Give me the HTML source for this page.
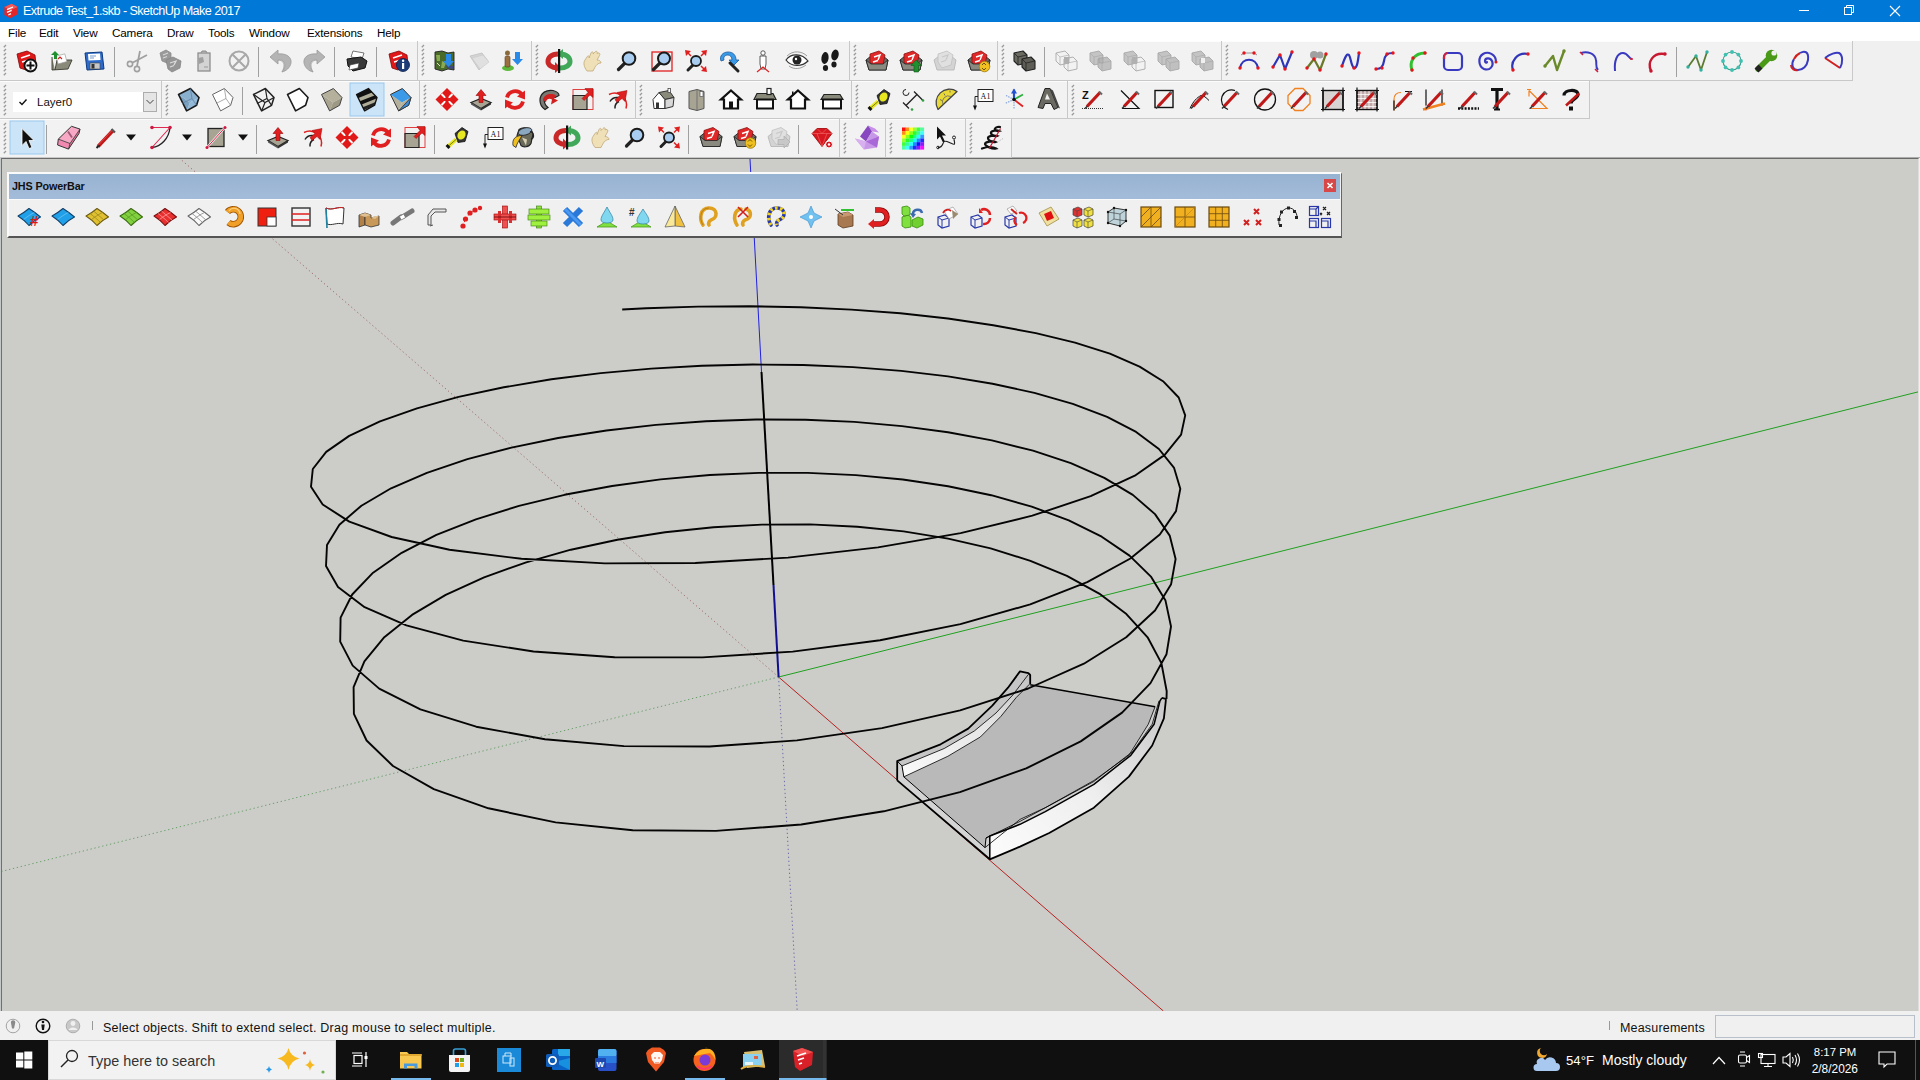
<!DOCTYPE html>
<html><head><meta charset="utf-8"><style>
*{box-sizing:border-box}
html,body{margin:0;padding:0}
body{width:1920px;height:1080px;position:relative;overflow:hidden;background:#f0f0f0;font-family:"Liberation Sans",sans-serif;}
.a{position:absolute}
#title{left:0;top:0;width:1920px;height:22px;background:#0078d7;color:#fff;font-size:12.5px}
#menu{left:0;top:22px;width:1920px;height:19px;background:#fff;font-size:11.7px;color:#000}
#menu span{position:absolute;top:4px;white-space:nowrap;letter-spacing:-0.18px}
#tb{left:0;top:41px;width:1920px;height:117px;background:#f0f0f0}
#vp{left:0;top:158px;width:1920px;height:853px}
#status{left:0;top:1011px;width:1920px;height:29px;background:#f0f0f0;font-size:12.5px;color:#111}
#task{left:0;top:1040px;width:1920px;height:40px;background:#101010;color:#fff}
</style></head>
<body>
<div id="title" class="a"><svg class="a" style="left:3px;top:3px" width="16" height="16" viewBox="0 0 24 24"><polygon points="2,6 13,1 22,6 22,17 11,23 2,18" fill="#e3262a"/><polygon points="2,6 13,1 22,6 11,11" fill="#f05a5a"/><path d="M6,10 L15,6 M6,14 L13,11 M8,18 L12,16" stroke="#fff" stroke-width="2"/></svg>
<span class="a" style="left:23px;top:4px;white-space:nowrap;letter-spacing:-0.55px;font-size:12.6px">Extrude Test_1.skb - SketchUp Make 2017</span>
<div class="a" style="left:1799px;top:10px;width:10px;height:1px;background:#fff"></div>
<svg class="a" style="left:1843px;top:4px" width="12" height="12" viewBox="0 0 12 12"><rect x="1.5" y="3.5" width="7" height="7" fill="none" stroke="#fff"/><path d="M3.5,3.5 V1.5 H10.5 V8.5 H8.5" fill="none" stroke="#fff"/></svg>
<svg class="a" style="left:1889px;top:5px" width="12" height="12" viewBox="0 0 12 12"><path d="M1,1 L11,11 M11,1 L1,11" stroke="#fff" stroke-width="1.1"/></svg>
</div>
<div id="menu" class="a">
<span style="left:8px">File</span><span style="left:39px">Edit</span><span style="left:73px">View</span><span style="left:112px">Camera</span><span style="left:167px">Draw</span><span style="left:208px">Tools</span><span style="left:249px">Window</span><span style="left:307px">Extensions</span><span style="left:377px">Help</span>
</div>
<div id="tb" class="a"><svg class="a" style="left:0;top:-41px" width="1920" height="158" viewBox="0 0 1920 158"><rect x="0" y="41" width="1920" height="117" fill="#f0f0f0" /><rect x="0" y="157" width="1920" height="1" fill="#acacac" /><rect x="0" y="41" width="417" height="39" fill="#f2f2f2" /><line x1="0" y1="80.5" x2="418" y2="80.5" stroke="#c8c8c8" stroke-width="1"/><line x1="417.5" y1="41" x2="417.5" y2="81" stroke="#c8c8c8" stroke-width="1"/><line x1="0" y1="41.5" x2="417" y2="41.5" stroke="#fcfcfc" stroke-width="1"/><rect x="418" y="41" width="113" height="39" fill="#f2f2f2" /><line x1="418" y1="80.5" x2="532" y2="80.5" stroke="#c8c8c8" stroke-width="1"/><line x1="531.5" y1="41" x2="531.5" y2="81" stroke="#c8c8c8" stroke-width="1"/><line x1="418" y1="41.5" x2="531" y2="41.5" stroke="#fcfcfc" stroke-width="1"/><rect x="532" y="41" width="317" height="39" fill="#f2f2f2" /><line x1="532" y1="80.5" x2="850" y2="80.5" stroke="#c8c8c8" stroke-width="1"/><line x1="849.5" y1="41" x2="849.5" y2="81" stroke="#c8c8c8" stroke-width="1"/><line x1="532" y1="41.5" x2="849" y2="41.5" stroke="#fcfcfc" stroke-width="1"/><rect x="850" y="41" width="147" height="39" fill="#f2f2f2" /><line x1="850" y1="80.5" x2="998" y2="80.5" stroke="#c8c8c8" stroke-width="1"/><line x1="997.5" y1="41" x2="997.5" y2="81" stroke="#c8c8c8" stroke-width="1"/><line x1="850" y1="41.5" x2="997" y2="41.5" stroke="#fcfcfc" stroke-width="1"/><rect x="998" y="41" width="223" height="39" fill="#f2f2f2" /><line x1="998" y1="80.5" x2="1222" y2="80.5" stroke="#c8c8c8" stroke-width="1"/><line x1="1221.5" y1="41" x2="1221.5" y2="81" stroke="#c8c8c8" stroke-width="1"/><line x1="998" y1="41.5" x2="1221" y2="41.5" stroke="#fcfcfc" stroke-width="1"/><rect x="1222" y="41" width="630" height="39" fill="#f2f2f2" /><line x1="1222" y1="80.5" x2="1853" y2="80.5" stroke="#c8c8c8" stroke-width="1"/><line x1="1852.5" y1="41" x2="1852.5" y2="81" stroke="#c8c8c8" stroke-width="1"/><line x1="1222" y1="41.5" x2="1852" y2="41.5" stroke="#fcfcfc" stroke-width="1"/><rect x="0" y="81" width="161" height="37" fill="#f2f2f2" /><line x1="0" y1="118.5" x2="162" y2="118.5" stroke="#c8c8c8" stroke-width="1"/><line x1="161.5" y1="81" x2="161.5" y2="119" stroke="#c8c8c8" stroke-width="1"/><line x1="0" y1="81.5" x2="161" y2="81.5" stroke="#fcfcfc" stroke-width="1"/><rect x="162" y="81" width="257" height="37" fill="#f2f2f2" /><line x1="162" y1="118.5" x2="420" y2="118.5" stroke="#c8c8c8" stroke-width="1"/><line x1="419.5" y1="81" x2="419.5" y2="119" stroke="#c8c8c8" stroke-width="1"/><line x1="162" y1="81.5" x2="419" y2="81.5" stroke="#fcfcfc" stroke-width="1"/><rect x="420" y="81" width="215" height="37" fill="#f2f2f2" /><line x1="420" y1="118.5" x2="636" y2="118.5" stroke="#c8c8c8" stroke-width="1"/><line x1="635.5" y1="81" x2="635.5" y2="119" stroke="#c8c8c8" stroke-width="1"/><line x1="420" y1="81.5" x2="635" y2="81.5" stroke="#fcfcfc" stroke-width="1"/><rect x="636" y="81" width="215" height="37" fill="#f2f2f2" /><line x1="636" y1="118.5" x2="852" y2="118.5" stroke="#c8c8c8" stroke-width="1"/><line x1="851.5" y1="81" x2="851.5" y2="119" stroke="#c8c8c8" stroke-width="1"/><line x1="636" y1="81.5" x2="851" y2="81.5" stroke="#fcfcfc" stroke-width="1"/><rect x="852" y="81" width="215" height="37" fill="#f2f2f2" /><line x1="852" y1="118.5" x2="1068" y2="118.5" stroke="#c8c8c8" stroke-width="1"/><line x1="1067.5" y1="81" x2="1067.5" y2="119" stroke="#c8c8c8" stroke-width="1"/><line x1="852" y1="81.5" x2="1067" y2="81.5" stroke="#fcfcfc" stroke-width="1"/><rect x="1068" y="81" width="521" height="37" fill="#f2f2f2" /><line x1="1068" y1="118.5" x2="1590" y2="118.5" stroke="#c8c8c8" stroke-width="1"/><line x1="1589.5" y1="81" x2="1589.5" y2="119" stroke="#c8c8c8" stroke-width="1"/><line x1="1068" y1="81.5" x2="1589" y2="81.5" stroke="#fcfcfc" stroke-width="1"/><rect x="0" y="119" width="839" height="38" fill="#f2f2f2" /><line x1="0" y1="157.5" x2="840" y2="157.5" stroke="#c8c8c8" stroke-width="1"/><line x1="839.5" y1="119" x2="839.5" y2="158" stroke="#c8c8c8" stroke-width="1"/><line x1="0" y1="119.5" x2="839" y2="119.5" stroke="#fcfcfc" stroke-width="1"/><rect x="840" y="119" width="45" height="38" fill="#f2f2f2" /><line x1="840" y1="157.5" x2="886" y2="157.5" stroke="#c8c8c8" stroke-width="1"/><line x1="885.5" y1="119" x2="885.5" y2="158" stroke="#c8c8c8" stroke-width="1"/><line x1="840" y1="119.5" x2="885" y2="119.5" stroke="#fcfcfc" stroke-width="1"/><rect x="886" y="119" width="79" height="38" fill="#f2f2f2" /><line x1="886" y1="157.5" x2="966" y2="157.5" stroke="#c8c8c8" stroke-width="1"/><line x1="965.5" y1="119" x2="965.5" y2="158" stroke="#c8c8c8" stroke-width="1"/><line x1="886" y1="119.5" x2="965" y2="119.5" stroke="#fcfcfc" stroke-width="1"/><rect x="966" y="119" width="45" height="38" fill="#f2f2f2" /><line x1="966" y1="157.5" x2="1012" y2="157.5" stroke="#c8c8c8" stroke-width="1"/><line x1="1011.5" y1="119" x2="1011.5" y2="158" stroke="#c8c8c8" stroke-width="1"/><line x1="966" y1="119.5" x2="1011" y2="119.5" stroke="#fcfcfc" stroke-width="1"/><path d="M3.8,47.2 L6,45" stroke="#9a9a9a" stroke-width="1.3"/><path d="M3.8,51.2 L6,49" stroke="#9a9a9a" stroke-width="1.3"/><path d="M3.8,55.2 L6,53" stroke="#9a9a9a" stroke-width="1.3"/><path d="M3.8,59.2 L6,57" stroke="#9a9a9a" stroke-width="1.3"/><path d="M3.8,63.2 L6,61" stroke="#9a9a9a" stroke-width="1.3"/><path d="M3.8,67.2 L6,65" stroke="#9a9a9a" stroke-width="1.3"/><path d="M3.8,71.2 L6,69" stroke="#9a9a9a" stroke-width="1.3"/><path d="M3.8,75.2 L6,73" stroke="#9a9a9a" stroke-width="1.3"/><path d="M421.8,47.2 L424,45" stroke="#9a9a9a" stroke-width="1.3"/><path d="M421.8,51.2 L424,49" stroke="#9a9a9a" stroke-width="1.3"/><path d="M421.8,55.2 L424,53" stroke="#9a9a9a" stroke-width="1.3"/><path d="M421.8,59.2 L424,57" stroke="#9a9a9a" stroke-width="1.3"/><path d="M421.8,63.2 L424,61" stroke="#9a9a9a" stroke-width="1.3"/><path d="M421.8,67.2 L424,65" stroke="#9a9a9a" stroke-width="1.3"/><path d="M421.8,71.2 L424,69" stroke="#9a9a9a" stroke-width="1.3"/><path d="M421.8,75.2 L424,73" stroke="#9a9a9a" stroke-width="1.3"/><path d="M535.8,47.2 L538,45" stroke="#9a9a9a" stroke-width="1.3"/><path d="M535.8,51.2 L538,49" stroke="#9a9a9a" stroke-width="1.3"/><path d="M535.8,55.2 L538,53" stroke="#9a9a9a" stroke-width="1.3"/><path d="M535.8,59.2 L538,57" stroke="#9a9a9a" stroke-width="1.3"/><path d="M535.8,63.2 L538,61" stroke="#9a9a9a" stroke-width="1.3"/><path d="M535.8,67.2 L538,65" stroke="#9a9a9a" stroke-width="1.3"/><path d="M535.8,71.2 L538,69" stroke="#9a9a9a" stroke-width="1.3"/><path d="M535.8,75.2 L538,73" stroke="#9a9a9a" stroke-width="1.3"/><path d="M853.8,47.2 L856,45" stroke="#9a9a9a" stroke-width="1.3"/><path d="M853.8,51.2 L856,49" stroke="#9a9a9a" stroke-width="1.3"/><path d="M853.8,55.2 L856,53" stroke="#9a9a9a" stroke-width="1.3"/><path d="M853.8,59.2 L856,57" stroke="#9a9a9a" stroke-width="1.3"/><path d="M853.8,63.2 L856,61" stroke="#9a9a9a" stroke-width="1.3"/><path d="M853.8,67.2 L856,65" stroke="#9a9a9a" stroke-width="1.3"/><path d="M853.8,71.2 L856,69" stroke="#9a9a9a" stroke-width="1.3"/><path d="M853.8,75.2 L856,73" stroke="#9a9a9a" stroke-width="1.3"/><path d="M1001.8,47.2 L1004,45" stroke="#9a9a9a" stroke-width="1.3"/><path d="M1001.8,51.2 L1004,49" stroke="#9a9a9a" stroke-width="1.3"/><path d="M1001.8,55.2 L1004,53" stroke="#9a9a9a" stroke-width="1.3"/><path d="M1001.8,59.2 L1004,57" stroke="#9a9a9a" stroke-width="1.3"/><path d="M1001.8,63.2 L1004,61" stroke="#9a9a9a" stroke-width="1.3"/><path d="M1001.8,67.2 L1004,65" stroke="#9a9a9a" stroke-width="1.3"/><path d="M1001.8,71.2 L1004,69" stroke="#9a9a9a" stroke-width="1.3"/><path d="M1001.8,75.2 L1004,73" stroke="#9a9a9a" stroke-width="1.3"/><path d="M1225.8,47.2 L1228,45" stroke="#9a9a9a" stroke-width="1.3"/><path d="M1225.8,51.2 L1228,49" stroke="#9a9a9a" stroke-width="1.3"/><path d="M1225.8,55.2 L1228,53" stroke="#9a9a9a" stroke-width="1.3"/><path d="M1225.8,59.2 L1228,57" stroke="#9a9a9a" stroke-width="1.3"/><path d="M1225.8,63.2 L1228,61" stroke="#9a9a9a" stroke-width="1.3"/><path d="M1225.8,67.2 L1228,65" stroke="#9a9a9a" stroke-width="1.3"/><path d="M1225.8,71.2 L1228,69" stroke="#9a9a9a" stroke-width="1.3"/><path d="M1225.8,75.2 L1228,73" stroke="#9a9a9a" stroke-width="1.3"/><path d="M3.8,87.2 L6,85" stroke="#9a9a9a" stroke-width="1.3"/><path d="M3.8,91.2 L6,89" stroke="#9a9a9a" stroke-width="1.3"/><path d="M3.8,95.2 L6,93" stroke="#9a9a9a" stroke-width="1.3"/><path d="M3.8,99.2 L6,97" stroke="#9a9a9a" stroke-width="1.3"/><path d="M3.8,103.2 L6,101" stroke="#9a9a9a" stroke-width="1.3"/><path d="M3.8,107.2 L6,105" stroke="#9a9a9a" stroke-width="1.3"/><path d="M3.8,111.2 L6,109" stroke="#9a9a9a" stroke-width="1.3"/><path d="M3.8,115.2 L6,113" stroke="#9a9a9a" stroke-width="1.3"/><path d="M165.8,87.2 L168,85" stroke="#9a9a9a" stroke-width="1.3"/><path d="M165.8,91.2 L168,89" stroke="#9a9a9a" stroke-width="1.3"/><path d="M165.8,95.2 L168,93" stroke="#9a9a9a" stroke-width="1.3"/><path d="M165.8,99.2 L168,97" stroke="#9a9a9a" stroke-width="1.3"/><path d="M165.8,103.2 L168,101" stroke="#9a9a9a" stroke-width="1.3"/><path d="M165.8,107.2 L168,105" stroke="#9a9a9a" stroke-width="1.3"/><path d="M165.8,111.2 L168,109" stroke="#9a9a9a" stroke-width="1.3"/><path d="M165.8,115.2 L168,113" stroke="#9a9a9a" stroke-width="1.3"/><path d="M423.8,87.2 L426,85" stroke="#9a9a9a" stroke-width="1.3"/><path d="M423.8,91.2 L426,89" stroke="#9a9a9a" stroke-width="1.3"/><path d="M423.8,95.2 L426,93" stroke="#9a9a9a" stroke-width="1.3"/><path d="M423.8,99.2 L426,97" stroke="#9a9a9a" stroke-width="1.3"/><path d="M423.8,103.2 L426,101" stroke="#9a9a9a" stroke-width="1.3"/><path d="M423.8,107.2 L426,105" stroke="#9a9a9a" stroke-width="1.3"/><path d="M423.8,111.2 L426,109" stroke="#9a9a9a" stroke-width="1.3"/><path d="M423.8,115.2 L426,113" stroke="#9a9a9a" stroke-width="1.3"/><path d="M639.8,87.2 L642,85" stroke="#9a9a9a" stroke-width="1.3"/><path d="M639.8,91.2 L642,89" stroke="#9a9a9a" stroke-width="1.3"/><path d="M639.8,95.2 L642,93" stroke="#9a9a9a" stroke-width="1.3"/><path d="M639.8,99.2 L642,97" stroke="#9a9a9a" stroke-width="1.3"/><path d="M639.8,103.2 L642,101" stroke="#9a9a9a" stroke-width="1.3"/><path d="M639.8,107.2 L642,105" stroke="#9a9a9a" stroke-width="1.3"/><path d="M639.8,111.2 L642,109" stroke="#9a9a9a" stroke-width="1.3"/><path d="M639.8,115.2 L642,113" stroke="#9a9a9a" stroke-width="1.3"/><path d="M855.8,87.2 L858,85" stroke="#9a9a9a" stroke-width="1.3"/><path d="M855.8,91.2 L858,89" stroke="#9a9a9a" stroke-width="1.3"/><path d="M855.8,95.2 L858,93" stroke="#9a9a9a" stroke-width="1.3"/><path d="M855.8,99.2 L858,97" stroke="#9a9a9a" stroke-width="1.3"/><path d="M855.8,103.2 L858,101" stroke="#9a9a9a" stroke-width="1.3"/><path d="M855.8,107.2 L858,105" stroke="#9a9a9a" stroke-width="1.3"/><path d="M855.8,111.2 L858,109" stroke="#9a9a9a" stroke-width="1.3"/><path d="M855.8,115.2 L858,113" stroke="#9a9a9a" stroke-width="1.3"/><path d="M1071.8,87.2 L1074,85" stroke="#9a9a9a" stroke-width="1.3"/><path d="M1071.8,91.2 L1074,89" stroke="#9a9a9a" stroke-width="1.3"/><path d="M1071.8,95.2 L1074,93" stroke="#9a9a9a" stroke-width="1.3"/><path d="M1071.8,99.2 L1074,97" stroke="#9a9a9a" stroke-width="1.3"/><path d="M1071.8,103.2 L1074,101" stroke="#9a9a9a" stroke-width="1.3"/><path d="M1071.8,107.2 L1074,105" stroke="#9a9a9a" stroke-width="1.3"/><path d="M1071.8,111.2 L1074,109" stroke="#9a9a9a" stroke-width="1.3"/><path d="M1071.8,115.2 L1074,113" stroke="#9a9a9a" stroke-width="1.3"/><path d="M3.8,125.2 L6,123" stroke="#9a9a9a" stroke-width="1.3"/><path d="M3.8,129.2 L6,127" stroke="#9a9a9a" stroke-width="1.3"/><path d="M3.8,133.2 L6,131" stroke="#9a9a9a" stroke-width="1.3"/><path d="M3.8,137.2 L6,135" stroke="#9a9a9a" stroke-width="1.3"/><path d="M3.8,141.2 L6,139" stroke="#9a9a9a" stroke-width="1.3"/><path d="M3.8,145.2 L6,143" stroke="#9a9a9a" stroke-width="1.3"/><path d="M3.8,149.2 L6,147" stroke="#9a9a9a" stroke-width="1.3"/><path d="M3.8,153.2 L6,151" stroke="#9a9a9a" stroke-width="1.3"/><path d="M843.8,125.2 L846,123" stroke="#9a9a9a" stroke-width="1.3"/><path d="M843.8,129.2 L846,127" stroke="#9a9a9a" stroke-width="1.3"/><path d="M843.8,133.2 L846,131" stroke="#9a9a9a" stroke-width="1.3"/><path d="M843.8,137.2 L846,135" stroke="#9a9a9a" stroke-width="1.3"/><path d="M843.8,141.2 L846,139" stroke="#9a9a9a" stroke-width="1.3"/><path d="M843.8,145.2 L846,143" stroke="#9a9a9a" stroke-width="1.3"/><path d="M843.8,149.2 L846,147" stroke="#9a9a9a" stroke-width="1.3"/><path d="M843.8,153.2 L846,151" stroke="#9a9a9a" stroke-width="1.3"/><path d="M889.8,125.2 L892,123" stroke="#9a9a9a" stroke-width="1.3"/><path d="M889.8,129.2 L892,127" stroke="#9a9a9a" stroke-width="1.3"/><path d="M889.8,133.2 L892,131" stroke="#9a9a9a" stroke-width="1.3"/><path d="M889.8,137.2 L892,135" stroke="#9a9a9a" stroke-width="1.3"/><path d="M889.8,141.2 L892,139" stroke="#9a9a9a" stroke-width="1.3"/><path d="M889.8,145.2 L892,143" stroke="#9a9a9a" stroke-width="1.3"/><path d="M889.8,149.2 L892,147" stroke="#9a9a9a" stroke-width="1.3"/><path d="M889.8,153.2 L892,151" stroke="#9a9a9a" stroke-width="1.3"/><path d="M969.8,125.2 L972,123" stroke="#9a9a9a" stroke-width="1.3"/><path d="M969.8,129.2 L972,127" stroke="#9a9a9a" stroke-width="1.3"/><path d="M969.8,133.2 L972,131" stroke="#9a9a9a" stroke-width="1.3"/><path d="M969.8,137.2 L972,135" stroke="#9a9a9a" stroke-width="1.3"/><path d="M969.8,141.2 L972,139" stroke="#9a9a9a" stroke-width="1.3"/><path d="M969.8,145.2 L972,143" stroke="#9a9a9a" stroke-width="1.3"/><path d="M969.8,149.2 L972,147" stroke="#9a9a9a" stroke-width="1.3"/><path d="M969.8,153.2 L972,151" stroke="#9a9a9a" stroke-width="1.3"/><line x1="114.5" y1="47" x2="114.5" y2="77" stroke="#a0a0a0" stroke-width="1"/><line x1="258.5" y1="47" x2="258.5" y2="77" stroke="#a0a0a0" stroke-width="1"/><line x1="334.5" y1="47" x2="334.5" y2="77" stroke="#a0a0a0" stroke-width="1"/><line x1="376.5" y1="47" x2="376.5" y2="77" stroke="#a0a0a0" stroke-width="1"/><line x1="1044.5" y1="47" x2="1044.5" y2="77" stroke="#a0a0a0" stroke-width="1"/><line x1="1676.5" y1="47" x2="1676.5" y2="77" stroke="#a0a0a0" stroke-width="1"/><line x1="242.5" y1="87" x2="242.5" y2="115" stroke="#a0a0a0" stroke-width="1"/><line x1="46.5" y1="125" x2="46.5" y2="154" stroke="#a0a0a0" stroke-width="1"/><line x1="256.5" y1="125" x2="256.5" y2="154" stroke="#a0a0a0" stroke-width="1"/><line x1="434.5" y1="125" x2="434.5" y2="154" stroke="#a0a0a0" stroke-width="1"/><line x1="544.5" y1="125" x2="544.5" y2="154" stroke="#a0a0a0" stroke-width="1"/><line x1="688.5" y1="125" x2="688.5" y2="154" stroke="#a0a0a0" stroke-width="1"/><line x1="798.5" y1="125" x2="798.5" y2="154" stroke="#a0a0a0" stroke-width="1"/><rect x="350" y="83" width="34" height="33" fill="#cce4f7" stroke="#99c9ef" stroke-width="1"/><rect x="10" y="121" width="34" height="33" fill="#cce4f7" stroke="#99c9ef" stroke-width="1"/><g transform="translate(15,49)"><polygon points="2,5 12,2 20,6 21,15 11,21 5,19" fill="#e01818" stroke="#7a0a0a" stroke-width="0.8"/><path d="M6,9 L15,6 M7,13 L14,11" stroke="#fff" stroke-width="1.6"/><circle cx="15.5" cy="16.5" r="6" fill="#fff" stroke="#111" stroke-width="1.8"/><path d="M15.5,12.5 V20.5 M11.5,16.5 H19.5" stroke="#111" stroke-width="2"/></g><g transform="translate(49,49)"><path d="M3,8 L3,21 L19,20 L23,11 L8,11 L6,21" fill="#8a8a7a" stroke="#3a3a30" stroke-width="0.9"/><rect x="8" y="6" width="9" height="8" fill="#fff" stroke="#999" stroke-width="0.6" transform="rotate(-15 12 10)"/><path d="M9,10 l2,-2 l2,2" fill="none" stroke="#d02020" stroke-width="1.2"/><polygon points="6,2 10,6 8,6 8,10 5,10 5,6 2,6" fill="#1f8f2f"/></g><g transform="translate(82,49)"><polygon points="3,4 20,3 22,20 5,21" fill="#2e6ccc" stroke="#0d3a80" stroke-width="1"/><polygon points="6,5 18,4.5 18.5,11 6.5,11.5" fill="#fff"/><path d="M8,7 H14 M8,9 H12" stroke="#5580c0" stroke-width="0.8"/><rect x="8" y="14" width="10" height="6" fill="#c8c8c8" stroke="#444" stroke-width="0.6"/><rect x="9.5" y="15" width="3" height="4.5" fill="#333"/></g><g transform="translate(125,49)"><circle cx="5" cy="15" r="2.6" fill="none" stroke="#a0a0a0" stroke-width="1.6"/><circle cx="12" cy="20" r="2.6" fill="none" stroke="#a0a0a0" stroke-width="1.6"/><path d="M7,14 L22,6 M12,17 L15,2" stroke="#a0a0a0" stroke-width="1.8"/></g><g transform="translate(159,49)"><polygon points="1,4 7,1 12,4 12,11 8,14 3,12" fill="#9a9a9a" stroke="#8a8a8a" stroke-width="0.8"/><path d="M4,6 L9,4 M4,9 L8,7.5" stroke="#d8d8d8" stroke-width="1.1"/><polygon points="7,11 14,8 22,12 21,19 13,23 9,20" fill="#959595" stroke="#858585" stroke-width="0.8"/><path d="M11,14 L17,12 L15,16 M11,18 L15,16.5" stroke="#dcdcdc" stroke-width="1.3" fill="none"/></g><g transform="translate(192,49)"><rect x="6" y="4" width="12" height="18" fill="#d4d4d4" stroke="#8e8e8e" stroke-width="1.3"/><path d="M9,4 L10,2 H14 L15,4" fill="#aaa" stroke="#8e8e8e" stroke-width="1"/><polygon points="6,9 11,8 12,13 7,15" fill="#a0a0a0"/><path d="M12,18 h4" stroke="#999" stroke-width="1"/></g><g transform="translate(227,49)"><circle cx="12" cy="12" r="9.5" fill="none" stroke="#a8a8a8" stroke-width="2"/><path d="M5.5,5.5 L18.5,18.5 M18.5,5.5 L5.5,18.5" stroke="#a8a8a8" stroke-width="2"/></g><g transform="translate(269,49)"><path d="M1,8 L9,1 L9,5 C17,4 23,8 22,14 C21,19 17,22 13,23 C16,19 17,15 14,12 C13,11 11,10.5 9,11 L9,15 Z" fill="#b4b4b4" stroke="#9a9a9a" stroke-width="0.8" stroke-linejoin="round"/><path d="M9,11 C12,11 15,13 15,16 C15,19 14,21 13,23" fill="none" stroke="#a0a0a0" stroke-width="0.8"/></g><g transform="translate(302,49)"><g transform="translate(24,0) scale(-1,1)"><path d="M1,8 L9,1 L9,5 C17,4 23,8 22,14 C21,19 17,22 13,23 C16,19 17,15 14,12 C13,11 11,10.5 9,11 L9,15 Z" fill="#b4b4b4" stroke="#9a9a9a" stroke-width="0.8" stroke-linejoin="round"/><path d="M9,11 C12,11 15,13 15,16 C15,19 14,21 13,23" fill="none" stroke="#a0a0a0" stroke-width="0.8"/></g></g><g transform="translate(345,49)"><polygon points="8,2 19,4 17,10 6,8" fill="#fff" stroke="#555" stroke-width="0.8"/><polygon points="2,10 16,8 22,12 20,19 8,22 3,17" fill="#3a3a3a" stroke="#111" stroke-width="1"/><polygon points="5,16 14,14 13,19 4,21" fill="#fff" stroke="#333" stroke-width="0.6"/></g><g transform="translate(387,49)"><polygon points="2,5 12,2 20,6 21,15 11,21 5,19" fill="#e01818" stroke="#7a0a0a" stroke-width="0.8"/><path d="M6,9 L15,6 M7,13 L14,11" stroke="#fff" stroke-width="1.6"/><circle cx="16" cy="16" r="6.5" fill="#1c3c78" stroke="#0a1f4a" stroke-width="0.8"/><rect x="15" y="14" width="2.2" height="6" fill="#fff"/><circle cx="16.1" cy="11.8" r="1.2" fill="#fff"/></g><g transform="translate(433,49)"><polygon points="2,3 9,2 15,4 21,3 21,21 15,20 9,22 2,20" fill="#4a6a2a" stroke="#222" stroke-width="0.9"/><path d="M3,6 h4 v6 h-3 z M9,12 l4,2 l-2,5 h-3 z" fill="#8aaa50"/><path d="M13,16 l7,1 v3 l-6,-1 z" fill="#404a80"/><path d="M4,14 l3,3" stroke="#e0e0c0" stroke-width="1"/><polygon points="13,5 18,5 18,12 21,12 15.5,18 10,12 13,12" fill="#2a8ae8"/></g><g transform="translate(467,49)"><polygon points="3,7 15,4 21,12 12,21" fill="#d4d4d4" stroke="#c0c0c0" stroke-width="0.8"/><polygon points="5,9 16,6 22,13 13,20" fill="#e0e0e0" stroke="#c8c8c8" stroke-width="0.6"/></g><g transform="translate(500,49)"><ellipse cx="8" cy="19" rx="6" ry="3" fill="#5cb83a"/><circle cx="7.5" cy="4" r="2.5" fill="#8a6a3a"/><rect x="5" y="7" width="5" height="11" rx="1.5" fill="#9a7040" stroke="#5a3a1a" stroke-width="0.6"/><polygon points="15,3 20,3 20,10 23,10 17.5,16 12,10 15,10" fill="#2a8ae8"/></g><g transform="translate(547,49)"><path d="M11,5 C4,5 1,9 1,12.5 C1,16 5,19 10,19" fill="none" stroke="#c82828" stroke-width="5"/><polygon points="8,13 14,19 8,24" fill="#c82828"/><path d="M13,5 C20,5 23,9 23,12.5 C23,16 19,19 13,19" fill="none" stroke="#40a858" stroke-width="5"/><polygon points="16,0 10,5 16,10" fill="#40a858"/><path d="M11,7.5 H13 M11,16.5 H13" stroke="#fff" stroke-width="1"/><rect x="11" y="0" width="2.2" height="24" fill="#111"/></g><g transform="translate(581,49)"><path d="M6,22 C3,18 2,14 4,11 L6,8 C7,6 9,7 8,9 L10,4 C11,2 13,3 12,5 L14,3 C15,1.5 17,2.5 16,4.5 L17,4 C18.5,3.5 19.5,5 18.5,6.5 L16,11 C18,11 20,12 20,14 C17,14 15,16 13,20 L12,22 Z" fill="#f0e0b8" stroke="#c0a878" stroke-width="0.8"/></g><g transform="translate(615,49)"><line x1="3.5" y1="20.5" x2="10" y2="14" stroke="#222" stroke-width="3.2" stroke-linecap="round"/><circle cx="14" cy="9.5" r="6.3" fill="#a8cdf0" stroke="#1a1a1a" stroke-width="2"/></g><g transform="translate(650,49)"><rect x="2" y="3" width="20" height="19" fill="none" stroke="#e02020" stroke-width="1.3"/><line x1="3.5" y1="20.5" x2="10" y2="14" stroke="#222" stroke-width="3.2" stroke-linecap="round"/><circle cx="14" cy="9.5" r="6" fill="#a8cdf0" stroke="#1a1a1a" stroke-width="2"/></g><g transform="translate(684,49)"><line x1="4" y1="21" x2="9" y2="16" stroke="#222" stroke-width="3" stroke-linecap="round"/><circle cx="12" cy="12" r="5" fill="#a8cdf0" stroke="#1a1a1a" stroke-width="1.8"/><polygon points="1,1 7,2 2,7" fill="#e02020"/><polygon points="23,1 17,2 22,7" fill="#e02020"/><polygon points="23,23 17,22 22,17" fill="#e02020"/><path d="M3,3 L7,7 M21,3 L17,7 M21,21 L17,17" stroke="#e02020" stroke-width="1.5"/></g><g transform="translate(717,49)"><path d="M4,12 C2,7 6,3 11,3 C16,3 19,6 19,11 L22,11 L17,16 L12,11 L15,11 C15,8 13,6 11,6 C8,6 6,8 7,11 Z" fill="#3a9ae8" stroke="#1a5a9a" stroke-width="0.8"/><line x1="13" y1="14" x2="21" y2="22" stroke="#222" stroke-width="3" stroke-linecap="round"/></g><g transform="translate(751,49)"><circle cx="12" cy="4" r="2.2" fill="#fff" stroke="#333" stroke-width="0.8"/><path d="M9,7 H15 L15,15 L14,20 H10 L9,15 Z" fill="#fff" stroke="#333" stroke-width="0.8"/><path d="M6,23 L12,18 L18,23" stroke="#e02020" stroke-width="1.2" fill="none"/></g><g transform="translate(785,49)"><path d="M1,11 C6,4 17,4 23,12 C17,18 6,18 1,11 Z" fill="#fff" stroke="#333" stroke-width="1.2"/><circle cx="12" cy="11" r="4.5" fill="#222"/><circle cx="11" cy="10" r="1.2" fill="#fff"/><path d="M2,7 C8,1 17,2 22,7 M4,17 C9,21 16,20 21,16" stroke="#888" stroke-width="0.8" fill="none"/></g><g transform="translate(818,49)"><ellipse cx="7" cy="9" rx="3.6" ry="6" fill="#1a1a1a" transform="rotate(8 7 9)"/><ellipse cx="7.5" cy="19" rx="2.6" ry="3" fill="#1a1a1a"/><ellipse cx="17" cy="6" rx="3.6" ry="5.5" fill="#1a1a1a" transform="rotate(15 17 6)"/><ellipse cx="16" cy="15.5" rx="2.6" ry="3" fill="#1a1a1a"/></g><g transform="translate(865,49)"><polygon points="1,11 6,7 18,7 23,11 21,21 4,21" fill="#6a6a62" stroke="#222" stroke-width="0.9"/><polygon points="5,5 14,2 20,6 18,16 9,19 5,13" fill="#e02828" stroke="#8a1010" stroke-width="0.8"/><path d="M9,8 L15,6 L13,11 M8,13 L13,11.5" stroke="#fff" stroke-width="1.5" fill="none"/><polygon points="1,11 4,21 21,21 23,11 18,15 6,15" fill="#8a8a80" stroke="#222" stroke-width="0.8"/></g><g transform="translate(899,49)"><polygon points="1,11 6,7 18,7 23,11 21,21 4,21" fill="#6a6a62" stroke="#222" stroke-width="0.9"/><polygon points="5,5 14,2 20,6 18,16 9,19 5,13" fill="#e02828" stroke="#8a1010" stroke-width="0.8"/><path d="M9,8 L15,6 L13,11 M8,13 L13,11.5" stroke="#fff" stroke-width="1.5" fill="none"/><polygon points="1,11 4,21 21,21 23,11 18,15 6,15" fill="#8a8a80" stroke="#222" stroke-width="0.8"/><polygon points="17,11 22.5,16.5 19.5,16.5 19.5,23 15,23 15,16.5 12,16.5" fill="#1f8f2f" stroke="#0a5a10" stroke-width="0.6"/></g><g transform="translate(933,49)"><polygon points="1,11 6,7 18,7 23,11 21,21 4,21" fill="#d4d4d4" stroke="#b8b8b8" stroke-width="0.9"/><polygon points="5,5 14,2 20,6 18,16 9,19 5,13" fill="#e0e0e0" stroke="#c0c0c0" stroke-width="0.8"/><path d="M9,8 L15,6 L13,11 M8,13 L13,11.5" stroke="#c8c8c8" stroke-width="1.2" fill="none"/></g><g transform="translate(967,49)"><polygon points="1,11 6,7 18,7 23,11 21,21 4,21" fill="#6a6a62" stroke="#222" stroke-width="0.9"/><polygon points="5,5 14,2 20,6 18,16 9,19 5,13" fill="#e02828" stroke="#8a1010" stroke-width="0.8"/><path d="M9,8 L15,6 L13,11 M8,13 L13,11.5" stroke="#fff" stroke-width="1.5" fill="none"/><polygon points="1,11 4,21 21,21 23,11 18,15 6,15" fill="#8a8a80" stroke="#222" stroke-width="0.8"/><circle cx="17.5" cy="17.5" r="5.3" fill="#f0c020" stroke="#9a7a10" stroke-width="0.8"/><path d="M15,16 l2,-2 l2,2 M15,19 l2,2 l2,-2" stroke="#6a5000" stroke-width="1" fill="none"/></g><g transform="translate(1013,49)"><polygon points="1,4 10,2 14,6 14,14 5,16 1,12" fill="#6a6a60" stroke="#222" stroke-width="1.1" stroke-linejoin="round"/><path d="M1,4 L5,8 L14,6 M5,8 V16" stroke="#222" stroke-width="0.77" fill="none"/><polygon points="9,10 18,8 22,12 22,20 13,22 9,18" fill="#5e5e56" stroke="#222" stroke-width="1.1" stroke-linejoin="round"/><path d="M9,10 L13,14 L22,12 M13,14 V22" stroke="#222" stroke-width="0.77" fill="none"/></g><g transform="translate(1055,49)"><polygon points="1,4 10,2 14,6 14,14 5,16 1,12" fill="none" stroke="#a8a8a8" stroke-width="0.9" stroke-linejoin="round"/><path d="M1,4 L5,8 L14,6 M5,8 V16" stroke="#a8a8a8" stroke-width="0.63" fill="none"/><polygon points="9,10 18,8 22,12 22,20 13,22 9,18" fill="none" stroke="#a8a8a8" stroke-width="0.9" stroke-linejoin="round"/><path d="M9,10 L13,14 L22,12 M13,14 V22" stroke="#a8a8a8" stroke-width="0.63" fill="none"/><rect x="9" y="8" width="5" height="7" fill="#b0b0b0"/></g><g transform="translate(1089,49)"><polygon points="1,4 10,2 14,6 14,14 5,16 1,12" fill="#c4c4c4" stroke="#a8a8a8" stroke-width="0.9" stroke-linejoin="round"/><path d="M1,4 L5,8 L14,6 M5,8 V16" stroke="#a8a8a8" stroke-width="0.63" fill="none"/><polygon points="9,10 18,8 22,12 22,20 13,22 9,18" fill="#c0c0c0" stroke="#a8a8a8" stroke-width="0.9" stroke-linejoin="round"/><path d="M9,10 L13,14 L22,12 M13,14 V22" stroke="#a8a8a8" stroke-width="0.63" fill="none"/><rect x="10" y="9" width="4" height="5" fill="#b4b4b4" stroke="#999" stroke-width="0.5"/></g><g transform="translate(1123,49)"><polygon points="1,4 10,2 14,6 14,14 5,16 1,12" fill="#c4c4c4" stroke="#a8a8a8" stroke-width="0.9" stroke-linejoin="round"/><path d="M1,4 L5,8 L14,6 M5,8 V16" stroke="#a8a8a8" stroke-width="0.63" fill="none"/><polygon points="9,10 18,8 22,12 22,20 13,22 9,18" fill="none" stroke="#a8a8a8" stroke-width="0.9" stroke-linejoin="round"/><path d="M9,10 L13,14 L22,12 M13,14 V22" stroke="#a8a8a8" stroke-width="0.63" fill="none"/><rect x="9" y="8" width="5" height="7" fill="#b0b0b0"/></g><g transform="translate(1157,49)"><polygon points="1,4 10,2 14,6 14,14 5,16 1,12" fill="#c4c4c4" stroke="#a8a8a8" stroke-width="0.9" stroke-linejoin="round"/><path d="M1,4 L5,8 L14,6 M5,8 V16" stroke="#a8a8a8" stroke-width="0.63" fill="none"/><polygon points="9,10 18,8 22,12 22,20 13,22 9,18" fill="#c0c0c0" stroke="#a8a8a8" stroke-width="0.9" stroke-linejoin="round"/><path d="M9,10 L13,14 L22,12 M13,14 V22" stroke="#a8a8a8" stroke-width="0.63" fill="none"/></g><g transform="translate(1191,49)"><polygon points="1,4 10,2 14,6 14,14 5,16 1,12" fill="#c4c4c4" stroke="#a8a8a8" stroke-width="0.9" stroke-linejoin="round"/><path d="M1,4 L5,8 L14,6 M5,8 V16" stroke="#a8a8a8" stroke-width="0.63" fill="none"/><polygon points="9,10 18,8 22,12 22,20 13,22 9,18" fill="#c0c0c0" stroke="#a8a8a8" stroke-width="0.9" stroke-linejoin="round"/><path d="M9,10 L13,14 L22,12 M13,14 V22" stroke="#a8a8a8" stroke-width="0.63" fill="none"/><rect x="10" y="9" width="4" height="5" fill="#f0f0f0"/></g><g transform="translate(1237,49)"><path d="M4,6 L7,4 L17,4 L20,6" stroke="#777" stroke-width="0.8" fill="none"/><path d="M3,19 C5,8 19,8 21,19" fill="none" stroke="#2f35b8" stroke-width="2.2" stroke-linecap="round" stroke-linejoin="round"/><circle cx="3" cy="19" r="1.7" fill="#e8141c"/><circle cx="21" cy="19" r="1.7" fill="#e8141c"/><circle cx="7" cy="4" r="1.7" fill="#e8141c"/><circle cx="17" cy="4" r="1.7" fill="#e8141c"/></g><g transform="translate(1271,49)"><path d="M2,18 L9,6 L14,20 L21,3" fill="none" stroke="#2f35b8" stroke-width="2.2" stroke-linecap="round" stroke-linejoin="round"/><circle cx="2" cy="18" r="1.7" fill="#e8141c"/><circle cx="9" cy="6" r="1.7" fill="#e8141c"/><circle cx="14" cy="20" r="1.7" fill="#e8141c"/><circle cx="21" cy="3" r="1.7" fill="#e8141c"/></g><g transform="translate(1305,49)"><circle cx="9" cy="6" r="4" fill="#a0a0a0"/><circle cx="15" cy="6" r="3.5" fill="#a0a0a0"/><path d="M2,19 L9,10 L15,21 L21,5" fill="none" stroke="#6a7a2a" stroke-width="2.2" stroke-linecap="round" stroke-linejoin="round"/><circle cx="2" cy="19" r="1.7" fill="#e8141c"/><circle cx="9" cy="10" r="1.7" fill="#e8141c"/><circle cx="15" cy="21" r="1.7" fill="#e8141c"/><circle cx="21" cy="5" r="1.7" fill="#e8141c"/></g><g transform="translate(1339,49)"><path d="M3,17 C6,8 8,4 10,6 C12,9 12,17 15,19 C18,20 19,12 20,4" fill="none" stroke="#2f35b8" stroke-width="2.2" stroke-linecap="round" stroke-linejoin="round"/><circle cx="3" cy="17" r="1.7" fill="#e8141c"/><circle cx="20" cy="4" r="1.7" fill="#e8141c"/><circle cx="15" cy="19" r="1.7" fill="#e8141c"/></g><g transform="translate(1373,49)"><path d="M3,20 C8,20 10,18 11,12 C12,6 14,4 20,4" fill="none" stroke="#2f35b8" stroke-width="2.2" stroke-linecap="round" stroke-linejoin="round"/><circle cx="3" cy="20" r="1.7" fill="#e8141c"/><circle cx="9" cy="19" r="1.7" fill="#e8141c"/><circle cx="14" cy="5" r="1.7" fill="#e8141c"/><circle cx="20" cy="4" r="1.7" fill="#e8141c"/></g><g transform="translate(1407,49)"><path d="M5,21 C2,13 7,4 18,4" fill="none" stroke="#30c030" stroke-width="3" stroke-linecap="round" stroke-linejoin="round"/><circle cx="5" cy="21" r="1.7" fill="#e8141c"/><circle cx="6" cy="9" r="1.7" fill="#e8141c"/><circle cx="18" cy="4" r="1.7" fill="#e8141c"/></g><g transform="translate(1441,49)"><rect x="3" y="4" width="18" height="17" rx="4" fill="none" stroke="#3a3ac0" stroke-width="2.2"/><path d="M3,10 V8 A4,4 0 0 1 7,4" fill="none" stroke="#d02040" stroke-width="2.2"/></g><g transform="translate(1475,49)"><path d="M21,13 C21,5 13,2 8,5 C3,8 3,17 9,20 C15,22 19,17 17,12 C15,8 10,9 10,12 C10,14 12,14 12,13" fill="none" stroke="#3a3ac0" stroke-width="2.2" stroke-linecap="round"/><circle cx="21" cy="13" r="1.5" fill="#d02020"/></g><g transform="translate(1509,49)"><path d="M4,21 C1,13 8,3 19,5" fill="none" stroke="#2f35b8" stroke-width="2.2" stroke-linecap="round" stroke-linejoin="round"/><circle cx="4" cy="21" r="1.7" fill="#e8141c"/><circle cx="19" cy="5" r="1.7" fill="#e8141c"/></g><g transform="translate(1543,49)"><path d="M2,17 L10,7 L14,21 L21,2" fill="none" stroke="#6a8a2a" stroke-width="2.4" stroke-linecap="round" stroke-linejoin="round"/><circle cx="2" cy="17" r="1.7" fill="#6a8a2a"/><circle cx="21" cy="2" r="1.7" fill="#6a8a2a"/></g><g transform="translate(1577,49)"><path d="M4,4 C10,2 18,4 19,11 C20,15 18,18 21,21" fill="none" stroke="#3a3ac0" stroke-width="2"/><path d="M3,3 L6,6 M18,20 L21,23" stroke="#d02040" stroke-width="1.5"/></g><g transform="translate(1611,49)"><path d="M4,22 C3,12 6,4 12,4 C17,4 18,10 21,10" fill="none" stroke="#3a3ac0" stroke-width="2"/><path d="M19,10 H22" stroke="#d02040" stroke-width="1.5"/></g><g transform="translate(1645,49)"><path d="M6,22 C2,13 8,3 20,5" fill="none" stroke="#c81830" stroke-width="2.4" stroke-linecap="round" stroke-linejoin="round"/><circle cx="6" cy="22" r="1.7" fill="#c81830"/><circle cx="20" cy="5" r="1.7" fill="#c81830"/></g><g transform="translate(1686,49)"><path d="M2,18 L10,7 L15,21 L21,3" fill="none" stroke="#5a7a30" stroke-width="1.8" stroke-linecap="round" stroke-linejoin="round"/><circle cx="2" cy="18" r="1.7" fill="#30b0a0"/><circle cx="10" cy="7" r="1.7" fill="#30b0a0"/><circle cx="15" cy="21" r="1.7" fill="#30b0a0"/><circle cx="21" cy="3" r="1.7" fill="#30b0a0"/></g><g transform="translate(1720,49)"><circle cx="12" cy="12" r="9" fill="none" stroke="#40a090" stroke-width="1.2"/><circle cx="21.0" cy="12.0" r="1.9" fill="#40c0b0"/><circle cx="18.4" cy="18.4" r="1.9" fill="#40c0b0"/><circle cx="12.0" cy="21.0" r="1.9" fill="#40c0b0"/><circle cx="5.6" cy="18.4" r="1.9" fill="#40c0b0"/><circle cx="3.0" cy="12.0" r="1.9" fill="#40c0b0"/><circle cx="5.6" cy="5.6" r="1.9" fill="#40c0b0"/><circle cx="12.0" cy="3.0" r="1.9" fill="#40c0b0"/><circle cx="18.4" cy="5.6" r="1.9" fill="#40c0b0"/></g><g transform="translate(1754,49)"><path d="M4,20 L16,8" stroke="#4a9a18" stroke-width="5.5" stroke-linecap="round"/><circle cx="17.5" cy="6.5" r="5.8" fill="#4a9a18"/><circle cx="20" cy="4" r="2.6" fill="#f0f0f0"/><path d="M2.5,21.5 L6.5,17.5" stroke="#222" stroke-width="5.5"/></g><g transform="translate(1788,49)"><path d="M12,4 C17,1 21,3 20,11 C19,17 15,21 10,21 C4,21 3,15 6,10" fill="none" stroke="#3a3ac0" stroke-width="2"/><path d="M6,10 C8,6 10,5 12,4" fill="none" stroke="#d02020" stroke-width="2"/><path d="M3,16 C3,20 7,22 10,21" fill="none" stroke="#d02020" stroke-width="2"/></g><g transform="translate(1822,49)"><path d="M3,9 L18,19" stroke="#d02020" stroke-width="2"/><path d="M3,9 C8,5 14,3 17,4 C21,6 21,14 18,19" fill="none" stroke="#3a3ac0" stroke-width="2"/></g><g transform="translate(177,87.5)"><polygon points="1.5,7 13,15 9.6,23.4" fill="#7aa0c0"/><polygon points="1.5,7 13.4,1 22,10 13,15" fill="#8ab0d0"/><polygon points="13,15 22,10 19.6,17.8 9.6,23.4" fill="#90b8d8"/><polygon points="1.5,7 13.4,1 22,10 19.6,17.8 9.6,23.4" fill="none" stroke="#1a1a1a" stroke-width="1.6" stroke-linejoin="round"/><path d="M13.4,1 L15,11 L19.6,17.8 M15,11 L5,16" stroke="#5a7a9a" stroke-width="0.7" fill="none"/></g><g transform="translate(211,87.5)"><polygon points="1.5,7 13,15 9.6,23.4" fill="#fff"/><polygon points="1.5,7 13.4,1 22,10 13,15" fill="#fff"/><polygon points="13,15 22,10 19.6,17.8 9.6,23.4" fill="#fff"/><polygon points="1.5,7 13.4,1 22,10 19.6,17.8 9.6,23.4" fill="none" stroke="#555" stroke-width="0.9" stroke-linejoin="round"/><path d="M13.4,1 L15,11 L19.6,17.8 M15,11 L5,16" stroke="#888" stroke-width="0.7" fill="none"/></g><g transform="translate(252,87.5)"><polygon points="1.5,7 13.4,1 22,10 19.6,17.8 9.6,23.4" fill="none" stroke="#222" stroke-width="1.5" stroke-linejoin="round"/><path d="M1.5,7 L13,15 L22,10 M13,15 L9.6,23.4 M5,16 L15,11 L19.6,17.8 M13.4,1 L15,11" stroke="#222" stroke-width="1.2" fill="none"/></g><g transform="translate(286,87.5)"><polygon points="1.5,7 13,15 9.6,23.4" fill="#fff"/><polygon points="1.5,7 13.4,1 22,10 13,15" fill="#fff"/><polygon points="13,15 22,10 19.6,17.8 9.6,23.4" fill="#fff"/><polygon points="1.5,7 13.4,1 22,10 19.6,17.8 9.6,23.4" fill="none" stroke="#1a1a1a" stroke-width="1.6" stroke-linejoin="round"/></g><g transform="translate(320,87.5)"><polygon points="1.5,7 13,15 9.6,23.4" fill="#a8a490"/><polygon points="1.5,7 13.4,1 22,10 13,15" fill="#b4b09c"/><polygon points="13,15 22,10 19.6,17.8 9.6,23.4" fill="#9c9884"/><polygon points="1.5,7 13.4,1 22,10 19.6,17.8 9.6,23.4" fill="none" stroke="#444" stroke-width="1.0" stroke-linejoin="round"/></g><g transform="translate(355,87.5)"><defs><clipPath id="cst"><polygon points="1.5,7 13.4,1 22,10 19.6,17.8 9.6,23.4"/></clipPath></defs><g clip-path="url(#cst)"><rect x="0" y="0" width="24" height="24" fill="#b0ad98"/><g transform="rotate(-22 12 12)"><rect x="-4" y="0" width="32" height="7.5" fill="#111"/><rect x="-4" y="11" width="32" height="3.5" fill="#111"/><rect x="-4" y="17.5" width="32" height="3" fill="#222"/></g></g><polygon points="1.5,7 13.4,1 22,10 19.6,17.8 9.6,23.4" fill="none" stroke="#111" stroke-width="1.3" stroke-linejoin="round"/></g><g transform="translate(389,87.5)"><polygon points="1.5,7 13,15 9.6,23.4" fill="#b4b09c"/><polygon points="1.5,7 13.4,1 22,10 13,15" fill="#3a9ae8"/><polygon points="13,15 22,10 19.6,17.8 9.6,23.4" fill="#b4b09c"/><polygon points="1.5,7 13.4,1 22,10 19.6,17.8 9.6,23.4" fill="none" stroke="#333" stroke-width="1.0" stroke-linejoin="round"/><polygon points="13.4,1 22,10 19.6,17.8 9.6,23.4 13,15 1.5,7" fill="none"/><polygon points="22,10 19.6,17.8 9.6,23.4" fill="#3a8ad8" stroke="#333" stroke-width="0.8"/></g><g transform="translate(435,87.5)"><polygon points="12,0.5 23.5,12 12,23.5 0.5,12" fill="#e01818"/><path d="M6.5,6.5 L17.5,17.5 M17.5,6.5 L6.5,17.5" stroke="#fff" stroke-width="2"/><rect x="9.5" y="9.5" width="5" height="5" fill="#fff"/><path d="M12,4 V20 M4,12 H20" stroke="#e01818" stroke-width="3"/></g><g transform="translate(469,87.5)"><polygon points="2,15 12,11 22,15 12,21" fill="#a8a494" stroke="#222" stroke-width="1.2"/><polygon points="2,15 12,21 12,23 2,17" fill="#555"/><polygon points="12,21 22,15 22,17 12,23" fill="#333"/><polygon points="12,2 17,8 14,8 14,15 10,15 10,8 7,8" fill="#e02020" stroke="#900" stroke-width="0.6"/></g><g transform="translate(503,87.5)"><path d="M4,10 A8.5,8.5 0 0 1 19,7" fill="none" stroke="#e02020" stroke-width="3.8"/><polygon points="22,3 22,12 14,9" fill="#e02020"/><path d="M20,14 A8.5,8.5 0 0 1 5,17" fill="none" stroke="#e02020" stroke-width="3.8"/><polygon points="2,21 2,12 10,15" fill="#e02020"/></g><g transform="translate(537,87.5)"><path d="M3,13 C3,5 10,2 16,3 C20,4 22,6 22,8 L18,10 C15,7 10,7 8,10 C6,13 8,18 11,20 L8,22 C5,20 3,17 3,13 Z" fill="#7a7a72" stroke="#222" stroke-width="1.2"/><path d="M6,12 C7,7 14,5 19,8 L17,11 L21,13 L14,17 L15,12 C12,10 9,12 9,15" fill="#d02020"/></g><g transform="translate(571,87.5)"><rect x="2" y="2" width="20" height="20" fill="none" stroke="#e04040" stroke-width="1"/><polygon points="2,8 16,8 16,22 2,22" fill="#a8a494" stroke="#222" stroke-width="1.2"/><polygon points="22,1 22,10 19,7.5 13,13 11,11 17,5 14,1" fill="#e02020" stroke="#900" stroke-width="0.5"/></g><g transform="translate(606,87.5)"><path d="M3,7 A12,12 0 0 1 20,21" fill="none" stroke="#e02020" stroke-width="1.5"/><path d="M4,14 A8,8 0 0 1 12,10 M9,21 A7,7 0 0 1 13,14" fill="none" stroke="#222" stroke-width="1.5"/><polygon points="21,3 19,14 16,11 11,15 9,12 14,8 11,5" fill="#e02020" stroke="#900" stroke-width="0.5"/></g><g transform="translate(651,87.5)"><polygon points="2,12 8,5 14,12 14,21 3,21" fill="#fff" stroke="#333" stroke-width="1"/><polygon points="8,5 18,3 23,10 14,12" fill="#8a8a7a" stroke="#333" stroke-width="1"/><polygon points="14,12 23,10 22,19 14,21" fill="#d8d8d8" stroke="#333" stroke-width="1"/><rect x="17" y="1" width="2.5" height="4" fill="#fff" stroke="#333" stroke-width="0.7"/><rect x="5" y="15" width="3" height="6" fill="#333"/></g><g transform="translate(685,87.5)"><polygon points="4,4 12,2 19,4 19,21 12,23 4,21" fill="#a8a494" stroke="#555" stroke-width="1"/><path d="M12,2 V23" stroke="#666" stroke-width="0.8"/><rect x="15" y="4" width="3" height="5" fill="#fff" stroke="#555" stroke-width="0.7"/></g><g transform="translate(719,87.5)"><polygon points="12,3 22,12 19,12 19,21 5,21 5,12 2,12" fill="#fff" stroke="#111" stroke-width="2.2" stroke-linejoin="miter"/><rect x="10" y="14" width="4" height="7" fill="#111"/></g><g transform="translate(753,87.5)"><polygon points="1,12 4,6 20,6 23,12" fill="#8a8a7a" stroke="#222" stroke-width="1.2"/><rect x="4" y="12" width="16" height="9" fill="#fff" stroke="#111" stroke-width="2"/><rect x="14" y="1" width="4" height="6" fill="#fff" stroke="#222" stroke-width="1.2"/></g><g transform="translate(786,87.5)"><polygon points="12,3 22,12 19,12 19,21 5,21 5,12 2,12" fill="#fff" stroke="#111" stroke-width="2.2"/><rect x="6" y="4" width="1.5" height="4" fill="#111"/></g><g transform="translate(820,87.5)"><polygon points="1,12 4,7 20,7 23,12" fill="#8a8a7a" stroke="#222" stroke-width="1.2"/><rect x="3" y="12" width="18" height="9" fill="#fff" stroke="#111" stroke-width="2"/></g><g transform="translate(867,87.5)"><polygon points="10,8 17,2 23,6 20,16 13,17" fill="#333" stroke="#111" stroke-width="0.8"/><ellipse cx="16.5" cy="9.5" rx="3.8" ry="4.8" fill="#e8e820" transform="rotate(30 16.5 9.5)"/><path d="M3,21 L11,14" stroke="#e8e820" stroke-width="4"/><path d="M2,22 L4,20" stroke="#111" stroke-width="4"/><path d="M3,21 L11,14" stroke="#111" stroke-width="0.5" fill="none"/></g><g transform="translate(901,87.5)"><path d="M5,18 L16,7 L22,13 M2,15 L8,21 M13,4 L19,10" stroke="#222" stroke-width="1.3" fill="none"/><circle cx="22" cy="13" r="1.3" fill="#30a040"/><circle cx="11" cy="22" r="1.3" fill="#30a040"/><path d="M5,2 a3,3 0 1 0 3,3" fill="none" stroke="#222" stroke-width="1"/></g><g transform="translate(935,87.5)"><path d="M3,22 L22,4 A13.4,13.4 0 0 0 3,22 Z" fill="#e8d838" stroke="#444" stroke-width="1.3" stroke-linejoin="round"/><path d="M8,17 A6,6 0 0 1 16,9" fill="none" stroke="#666" stroke-width="0.8"/><path d="M5,12 l2,1 M9,6 l1,2 M15,3 l0,2" stroke="#555" stroke-width="0.8"/></g><g transform="translate(970,87.5)"><rect x="8" y="2" width="15" height="12" fill="#fff" stroke="#222" stroke-width="1"/><text x="15.5" y="11.5" font-size="8" font-family="Liberation Serif" text-anchor="middle" fill="#111">A1</text><path d="M8,9 H5 V19" stroke="#222" stroke-width="1" fill="none"/><polygon points="3,18 7,18 5,23" fill="#111"/></g><g transform="translate(1002,87.5)"><path d="M12,12 L12,2" stroke="#2050d0" stroke-width="2.2"/><polygon points="9,6 15,6 12,1" fill="#2050d0"/><path d="M12,12 L21,7" stroke="#30b040" stroke-width="1.8"/><path d="M12,12 L21,19" stroke="#e02020" stroke-width="1.8"/><path d="M12,12 L3,16 M12,12 L4,8 M12,12 V22" stroke="#8aa8e0" stroke-width="1.2" stroke-dasharray="1.5 1"/><circle cx="12" cy="12" r="1.8" fill="#111"/></g><g transform="translate(1036,87.5)"><polygon points="9,1 14,1 22,20 18,22 15,16 9,16 7,21 2,20" fill="#6a6a62" stroke="#222" stroke-width="1"/><polygon points="11,6 14,12 9,12" fill="#f0f0f0"/><polygon points="14,1 17,3 24,21 22,20" fill="#444"/></g><g transform="translate(1081,87.5)"><text x="1" y="11" font-size="11" font-weight="bold" font-family="Liberation Sans" fill="#111">Z</text><path d="M1,21 H23" stroke="#333" stroke-width="1" stroke-dasharray="1 1"/><path d="M6,19 L19,5" stroke="#c01818" stroke-width="3.2"/><path d="M18,4 L21,7" stroke="#666" stroke-width="2"/><path d="M4,21 L6.5,18.5" stroke="#333" stroke-width="1.6"/></g><g transform="translate(1118,87.5)"><path d="M3,3 L21,21 H4" stroke="#111" stroke-width="1.2" fill="none"/><path d="M6,19 L19,5" stroke="#c01818" stroke-width="3.2"/><path d="M18,4 L21,7" stroke="#666" stroke-width="2"/><path d="M4,21 L6.5,18.5" stroke="#333" stroke-width="1.6"/></g><g transform="translate(1152,87.5)"><rect x="3" y="3" width="18" height="17" fill="none" stroke="#111" stroke-width="1.4"/><path d="M6,19 L19,5" stroke="#c01818" stroke-width="3.2"/><path d="M18,4 L21,7" stroke="#666" stroke-width="2"/><path d="M4,21 L6.5,18.5" stroke="#333" stroke-width="1.6"/></g><g transform="translate(1187,87.5)"><path d="M3,21 C6,14 10,10 14,8 C17,8 19,10 22,13" stroke="#111" stroke-width="1" fill="none"/><path d="M6,19 L19,5" stroke="#c01818" stroke-width="3.2"/><path d="M18,4 L21,7" stroke="#666" stroke-width="2"/><path d="M4,21 L6.5,18.5" stroke="#333" stroke-width="1.6"/></g><g transform="translate(1218,87.5)"><path d="M10,22 A9,9 0 0 1 17,3" stroke="#111" stroke-width="1.2" fill="none"/><path d="M6,19 L19,5" stroke="#c01818" stroke-width="3.2"/><path d="M18,4 L21,7" stroke="#666" stroke-width="2"/><path d="M4,21 L6.5,18.5" stroke="#333" stroke-width="1.6"/></g><g transform="translate(1253,87.5)"><circle cx="12" cy="12" r="10.5" stroke="#111" stroke-width="1.3" fill="none"/><path d="M6,19 L19,5" stroke="#c01818" stroke-width="3.2"/><path d="M18,4 L21,7" stroke="#666" stroke-width="2"/><path d="M4,21 L6.5,18.5" stroke="#333" stroke-width="1.6"/></g><g transform="translate(1287,87.5)"><polygon points="8,1 16,1 23,8 23,16 16,23 8,23 1,16 1,8" stroke="#f08020" stroke-width="1.3" fill="none"/><path d="M6,19 L19,5" stroke="#c01818" stroke-width="3.2"/><path d="M18,4 L21,7" stroke="#666" stroke-width="2"/><path d="M4,21 L6.5,18.5" stroke="#333" stroke-width="1.6"/></g><g transform="translate(1321,87.5)"><rect x="2" y="3" width="20" height="19" fill="#d8d4d4" stroke="#111" stroke-width="1.4"/><path d="M0,3 H24 M0,22 H24 M2,0 V24 M22,0 V24" stroke="#111" stroke-width="1.2"/><path d="M6,19 L19,5" stroke="#c01818" stroke-width="3.2"/><path d="M18,4 L21,7" stroke="#666" stroke-width="2"/><path d="M4,21 L6.5,18.5" stroke="#333" stroke-width="1.6"/></g><g transform="translate(1355,87.5)"><rect x="2" y="3" width="20" height="19" fill="#c0a8a8" stroke="#111" stroke-width="1.4"/><path d="M6,3 V22 M10,3 V22 M14,3 V22 M18,3 V22 M2,7 H22 M2,11 H22 M2,15 H22 M2,19 H22" stroke="#fff" stroke-width="0.8"/><path d="M0,3 H24 M0,22 H24 M2,0 V24 M22,0 V24" stroke="#111" stroke-width="1.2"/><path d="M6,19 L19,5" stroke="#c01818" stroke-width="3.2"/><path d="M18,4 L21,7" stroke="#666" stroke-width="2"/><path d="M4,21 L6.5,18.5" stroke="#333" stroke-width="1.6"/></g><g transform="translate(1391,87.5)"><path d="M3,23 V12 C3,7 6,5 10,5" stroke="#f08020" stroke-width="1.2" fill="none"/><path d="M3,23 V13 M14,4 H21" stroke="#111" stroke-width="1.2"/><path d="M6,19 L19,5" stroke="#c01818" stroke-width="3.2"/><path d="M18,4 L21,7" stroke="#666" stroke-width="2"/><path d="M4,21 L6.5,18.5" stroke="#333" stroke-width="1.6"/></g><g transform="translate(1422,87.5)"><path d="M4,2 V18 M20,2 V18" stroke="#111" stroke-width="1.2"/><path d="M1,22 L23,16" stroke="#f08020" stroke-width="2.5"/><path d="M4,18 V24" stroke="#e02020" stroke-dasharray="1 1" stroke-width="0.8"/><path d="M6,19 L19,5" stroke="#c01818" stroke-width="3.2"/><path d="M18,4 L21,7" stroke="#666" stroke-width="2"/><path d="M4,21 L6.5,18.5" stroke="#333" stroke-width="1.6"/></g><g transform="translate(1456,87.5)"><path d="M2,21 H23" stroke="#111" stroke-width="2.4" stroke-dasharray="2 1.3"/><path d="M6,19 L19,5" stroke="#c01818" stroke-width="3.2"/><path d="M18,4 L21,7" stroke="#666" stroke-width="2"/><path d="M4,21 L6.5,18.5" stroke="#333" stroke-width="1.6"/></g><g transform="translate(1489,87.5)"><path d="M2,2 H14 M8,2 V22" stroke="#111" stroke-width="3.2"/><path d="M5,22 H11" stroke="#111" stroke-width="2"/><path d="M6,19 L19,5" stroke="#c01818" stroke-width="3.2"/><path d="M18,4 L21,7" stroke="#666" stroke-width="2"/><path d="M4,21 L6.5,18.5" stroke="#333" stroke-width="1.6"/></g><g transform="translate(1526,87.5)"><path d="M3,3 V9 M3,3 L21,21 H3" stroke="#f08020" stroke-width="1.2" fill="none"/><path d="M1,2 H5" stroke="#f08020" stroke-width="1"/><path d="M6,19 L19,5" stroke="#c01818" stroke-width="3.2"/><path d="M18,4 L21,7" stroke="#666" stroke-width="2"/><path d="M4,21 L6.5,18.5" stroke="#333" stroke-width="1.6"/></g><g transform="translate(1559,87.5)"><path d="M5,8 C5,2 19,1 19,7 C19,11 12,12 12,16" stroke="#111" stroke-width="3.2" fill="none"/><rect x="10" y="19" width="4" height="4" fill="#111"/><path d="M7,18 L20,6" stroke="#c01818" stroke-width="2.6"/></g><g transform="translate(15,125.5)"><polygon points="7,3 7,20 11,16 14,23 17,22 14,15 19,15" fill="#111" stroke="#fff" stroke-width="0.8"/></g><g transform="translate(56,125.5)"><polygon points="2.3,13.6 15.5,0.8 24,3.6 14,18" fill="#f6a8c4"/><polygon points="1.6,19.5 2.3,13.6 14,18 12.5,23.6" fill="#f088b0"/><polygon points="14,18 24,3.6 23,8 12.5,23.6" fill="#e07898"/><polygon points="2.3,13.6 15.5,0.8 24,3.6 23,8 12.5,23.6 1.6,19.5" fill="none" stroke="#333" stroke-width="1" stroke-linejoin="round"/><path d="M2.3,13.6 L14,18 L24,3.6 M14,18 L12.5,23.6" stroke="#333" stroke-width="0.8" fill="none"/><path d="M12,6 L16,12" stroke="#a05a78" stroke-width="1.8"/></g><g transform="translate(94,125.5)"><path d="M4,21 L19,5" stroke="#c01818" stroke-width="3.6"/><path d="M17.5,3.5 L21,7" stroke="#555" stroke-width="2.2"/><path d="M2.5,22.5 L5.5,19.5" stroke="#222" stroke-width="2"/><path d="M4,20 L18,5" stroke="#e04040" stroke-width="1"/></g><polygon points="126,134.5 136,134.5 131,140.5" fill="#111"/><g transform="translate(149,125.5)"><path d="M3,2 L21,2 M3,22 L21,2" stroke="#e02850" stroke-width="1.1"/><path d="M3,22 C12,21 20,13 21,2" stroke="#222" stroke-width="1.3" fill="none"/><circle cx="3" cy="2" r="1.8" fill="#d01840"/><circle cx="21" cy="2" r="1.8" fill="#d01840"/><circle cx="3" cy="22" r="1.8" fill="#d01840"/></g><polygon points="182,134.5 192,134.5 187,140.5" fill="#111"/><g transform="translate(204,125.5)"><rect x="4" y="3" width="16" height="18" fill="#a8a494" stroke="#222" stroke-width="1.3"/><path d="M3,22 L21,2" stroke="#f0f0f0" stroke-width="2.2"/><path d="M3,22 L21,2" stroke="#e02850" stroke-width="1"/><circle cx="3" cy="22" r="1.5" fill="#d01840"/><circle cx="21" cy="2" r="1.5" fill="#d01840"/></g><polygon points="238,134.5 248,134.5 243,140.5" fill="#111"/><g transform="translate(266,125.5)"><polygon points="2,15 12,11 22,15 12,21" fill="#a8a494" stroke="#222" stroke-width="1.2"/><polygon points="2,15 12,21 12,23 2,17" fill="#555"/><polygon points="12,21 22,15 22,17 12,23" fill="#333"/><polygon points="12,2 17,8 14,8 14,15 10,15 10,8 7,8" fill="#e02020" stroke="#900" stroke-width="0.6"/></g><g transform="translate(301,125.5)"><path d="M3,7 A12,12 0 0 1 20,21" fill="none" stroke="#e02020" stroke-width="1.5"/><path d="M4,14 A8,8 0 0 1 12,10 M9,21 A7,7 0 0 1 13,14" fill="none" stroke="#222" stroke-width="1.5"/><polygon points="21,3 19,14 16,11 11,15 9,12 14,8 11,5" fill="#e02020" stroke="#900" stroke-width="0.5"/></g><g transform="translate(335,125.5)"><polygon points="12,0.5 23.5,12 12,23.5 0.5,12" fill="#e01818"/><path d="M6.5,6.5 L17.5,17.5 M17.5,6.5 L6.5,17.5" stroke="#fff" stroke-width="2"/><rect x="9.5" y="9.5" width="5" height="5" fill="#fff"/><path d="M12,4 V20 M4,12 H20" stroke="#e01818" stroke-width="3"/></g><g transform="translate(369,125.5)"><path d="M4,10 A8.5,8.5 0 0 1 19,7" fill="none" stroke="#e02020" stroke-width="3.8"/><polygon points="22,3 22,12 14,9" fill="#e02020"/><path d="M20,14 A8.5,8.5 0 0 1 5,17" fill="none" stroke="#e02020" stroke-width="3.8"/><polygon points="2,21 2,12 10,15" fill="#e02020"/></g><g transform="translate(403,125.5)"><rect x="2" y="2" width="20" height="20" fill="none" stroke="#e04040" stroke-width="1"/><polygon points="2,8 16,8 16,22 2,22" fill="#a8a494" stroke="#222" stroke-width="1.2"/><polygon points="22,1 22,10 19,7.5 13,13 11,11 17,5 14,1" fill="#e02020" stroke="#900" stroke-width="0.5"/></g><g transform="translate(445,125.5)"><polygon points="10,8 17,2 23,6 20,16 13,17" fill="#333" stroke="#111" stroke-width="0.8"/><ellipse cx="16.5" cy="9.5" rx="3.8" ry="4.8" fill="#e8e820" transform="rotate(30 16.5 9.5)"/><path d="M3,21 L11,14" stroke="#e8e820" stroke-width="4"/><path d="M2,22 L4,20" stroke="#111" stroke-width="4"/><path d="M3,21 L11,14" stroke="#111" stroke-width="0.5" fill="none"/></g><g transform="translate(480,125.5)"><rect x="8" y="2" width="15" height="12" fill="#fff" stroke="#222" stroke-width="1"/><text x="15.5" y="11.5" font-size="8" font-family="Liberation Serif" text-anchor="middle" fill="#111">A1</text><path d="M8,9 H5 V19" stroke="#222" stroke-width="1" fill="none"/><polygon points="3,18 7,18 5,23" fill="#111"/></g><g transform="translate(511,125.5)"><path d="M8,4 C12,1 20,2 22,8 L20,18 C18,22 12,22 10,20 L6,10 Z" fill="#6a6a5a" stroke="#222" stroke-width="1.1"/><ellipse cx="14" cy="6" rx="7" ry="3.5" fill="#8aa8c0" stroke="#222" stroke-width="0.8" transform="rotate(-15 14 6)"/><path d="M2,20 C1,14 4,10 11,10 C9,14 6,17 5,22 Z" fill="#f0c020" stroke="#222" stroke-width="0.8"/><path d="M11,12 L16,14 L15,20" fill="#d8d0b0"/><path d="M19,6 C23,7 24,12 20,14" fill="none" stroke="#222" stroke-width="1.2"/></g><g transform="translate(555,125.5)"><path d="M11,5 C4,5 1,9 1,12.5 C1,16 5,19 10,19" fill="none" stroke="#c82828" stroke-width="5"/><polygon points="8,13 14,19 8,24" fill="#c82828"/><path d="M13,5 C20,5 23,9 23,12.5 C23,16 19,19 13,19" fill="none" stroke="#40a858" stroke-width="5"/><polygon points="16,0 10,5 16,10" fill="#40a858"/><path d="M11,7.5 H13 M11,16.5 H13" stroke="#fff" stroke-width="1"/><rect x="11" y="0" width="2.2" height="24" fill="#111"/></g><g transform="translate(589,125.5)"><path d="M6,22 C3,18 2,14 4,11 L6,8 C7,6 9,7 8,9 L10,4 C11,2 13,3 12,5 L14,3 C15,1.5 17,2.5 16,4.5 L17,4 C18.5,3.5 19.5,5 18.5,6.5 L16,11 C18,11 20,12 20,14 C17,14 15,16 13,20 L12,22 Z" fill="#f0e0b8" stroke="#c0a878" stroke-width="0.8"/></g><g transform="translate(623,125.5)"><line x1="3.5" y1="20.5" x2="10" y2="14" stroke="#222" stroke-width="3.2" stroke-linecap="round"/><circle cx="14" cy="9.5" r="6.3" fill="#a8cdf0" stroke="#1a1a1a" stroke-width="2"/></g><g transform="translate(657,125.5)"><line x1="4" y1="21" x2="9" y2="16" stroke="#222" stroke-width="3" stroke-linecap="round"/><circle cx="12" cy="12" r="5" fill="#a8cdf0" stroke="#1a1a1a" stroke-width="1.8"/><polygon points="1,1 7,2 2,7" fill="#e02020"/><polygon points="23,1 17,2 22,7" fill="#e02020"/><polygon points="23,23 17,22 22,17" fill="#e02020"/><path d="M3,3 L7,7 M21,3 L17,7 M21,21 L17,17" stroke="#e02020" stroke-width="1.5"/></g><g transform="translate(699,125.5)"><polygon points="1,11 6,7 18,7 23,11 21,21 4,21" fill="#6a6a62" stroke="#222" stroke-width="0.9"/><polygon points="5,5 14,2 20,6 18,16 9,19 5,13" fill="#e02828" stroke="#8a1010" stroke-width="0.8"/><path d="M9,8 L15,6 L13,11 M8,13 L13,11.5" stroke="#fff" stroke-width="1.5" fill="none"/><polygon points="1,11 4,21 21,21 23,11 18,15 6,15" fill="#8a8a80" stroke="#222" stroke-width="0.8"/></g><g transform="translate(733,125.5)"><polygon points="1,11 6,7 18,7 23,11 21,21 4,21" fill="#6a6a62" stroke="#222" stroke-width="0.9"/><polygon points="5,5 14,2 20,6 18,16 9,19 5,13" fill="#e02828" stroke="#8a1010" stroke-width="0.8"/><path d="M9,8 L15,6 L13,11 M8,13 L13,11.5" stroke="#fff" stroke-width="1.5" fill="none"/><polygon points="1,11 4,21 21,21 23,11 18,15 6,15" fill="#8a8a80" stroke="#222" stroke-width="0.8"/><circle cx="17.5" cy="17.5" r="5.3" fill="#f0c020" stroke="#9a7a10" stroke-width="0.8"/><path d="M15,16 l2,-2 l2,2 M15,19 l2,2 l2,-2" stroke="#6a5000" stroke-width="1" fill="none"/></g><g transform="translate(767,125.5)"><polygon points="1,11 6,7 18,7 23,11 21,21 4,21" fill="#d4d4d4" stroke="#b8b8b8" stroke-width="0.9"/><polygon points="5,5 14,2 20,6 18,16 9,19 5,13" fill="#e0e0e0" stroke="#c0c0c0" stroke-width="0.8"/><path d="M9,8 L15,6 L13,11 M8,13 L13,11.5" stroke="#c8c8c8" stroke-width="1.2" fill="none"/><polygon points="11,14 17,14 17,10.5 23,16.5 17,22.5 17,19 11,19" fill="#c8c8c8" stroke="#a8a8a8" stroke-width="0.6"/></g><g transform="translate(810,125.5)"><polygon points="2,8 7,3 17,3 22,8 12,21" fill="#d81820" stroke="#900" stroke-width="0.8"/><path d="M2,8 H22 M7,3 L12,8 L17,3 M7,8 L12,21 L17,8" stroke="#f06060" stroke-width="0.7" fill="none"/><circle cx="19" cy="19" r="3.5" fill="#d81820" stroke="#fff" stroke-width="1"/><circle cx="19" cy="19" r="1.2" fill="#fff"/></g><g transform="translate(855,125.5)"><polygon points="13,0 20,3 24,7 17,6" fill="#c890e8"/><polygon points="13,0 17,6 11,16 5,11" fill="#8848c0"/><polygon points="0,13 11,16 17,6 24,11 22,22 9,24" fill="#c898e8"/><polygon points="0,13 11,16 9,24" fill="#d8b0f0"/><polygon points="11,16 24,11 22,22" fill="#a868d8"/></g><g transform="translate(901,125.5)"><rect x="1.00" y="2.00" width="3.77" height="3.77" fill="#ff0c0c"/><rect x="4.67" y="2.00" width="3.77" height="3.77" fill="#ff8b19"/><rect x="8.33" y="2.00" width="3.77" height="3.77" fill="#fffe26"/><rect x="12.00" y="2.00" width="3.77" height="3.77" fill="#9aff33"/><rect x="15.67" y="2.00" width="3.77" height="3.77" fill="#41ff3f"/><rect x="19.33" y="2.00" width="3.77" height="3.77" fill="#4cffa3"/><rect x="1.00" y="5.67" width="3.77" height="3.77" fill="#ff8b19"/><rect x="4.67" y="5.67" width="3.77" height="3.77" fill="#fffe0c"/><rect x="8.33" y="5.67" width="3.77" height="3.77" fill="#8dff19"/><rect x="12.00" y="5.67" width="3.77" height="3.77" fill="#27ff26"/><rect x="15.67" y="5.67" width="3.77" height="3.77" fill="#33ff96"/><rect x="19.33" y="5.67" width="3.77" height="3.77" fill="#3ffffc"/><rect x="1.00" y="9.33" width="3.77" height="3.77" fill="#fffe26"/><rect x="4.67" y="9.33" width="3.77" height="3.77" fill="#8dff19"/><rect x="8.33" y="9.33" width="3.77" height="3.77" fill="#0eff0c"/><rect x="12.00" y="9.33" width="3.77" height="3.77" fill="#19ff89"/><rect x="15.67" y="9.33" width="3.77" height="3.77" fill="#26fffc"/><rect x="19.33" y="9.33" width="3.77" height="3.77" fill="#339bff"/><rect x="1.00" y="13.00" width="3.77" height="3.77" fill="#9aff33"/><rect x="4.67" y="13.00" width="3.77" height="3.77" fill="#27ff26"/><rect x="8.33" y="13.00" width="3.77" height="3.77" fill="#19ff89"/><rect x="12.00" y="13.00" width="3.77" height="3.77" fill="#0cfffc"/><rect x="15.67" y="13.00" width="3.77" height="3.77" fill="#198fff"/><rect x="19.33" y="13.00" width="3.77" height="3.77" fill="#2629ff"/><rect x="1.00" y="16.67" width="3.77" height="3.77" fill="#41ff3f"/><rect x="4.67" y="16.67" width="3.77" height="3.77" fill="#33ff96"/><rect x="8.33" y="16.67" width="3.77" height="3.77" fill="#26fffc"/><rect x="12.00" y="16.67" width="3.77" height="3.77" fill="#198fff"/><rect x="15.67" y="16.67" width="3.77" height="3.77" fill="#0c10ff"/><rect x="19.33" y="16.67" width="3.77" height="3.77" fill="#8819ff"/><rect x="1.00" y="20.33" width="3.77" height="3.77" fill="#4cffa3"/><rect x="4.67" y="20.33" width="3.77" height="3.77" fill="#3ffffc"/><rect x="8.33" y="20.33" width="3.77" height="3.77" fill="#339bff"/><rect x="12.00" y="20.33" width="3.77" height="3.77" fill="#2629ff"/><rect x="15.67" y="20.33" width="3.77" height="3.77" fill="#8819ff"/><rect x="19.33" y="20.33" width="3.77" height="3.77" fill="#fa0cff"/></g><g transform="translate(935,125.5)"><polygon points="2,1 2,14 5,11 8,17 10,16 7,10 11,10" fill="#111"/><path d="M3,22 C10,22 6,14 12,16 C18,18 21,22 19,14" stroke="#222" stroke-width="1.2" fill="none"/><circle cx="3" cy="22" r="1.3" fill="none" stroke="#222"/><circle cx="19" cy="12" r="1.5" fill="none" stroke="#222"/></g><g transform="translate(981,125.5)"><path d="M1,23 C6,21 12,21 15,23 C11,24 4,20 4,18.5 C4,16.5 12,15 14.5,16.5 C12,17.5 7,15 7,12.5 C7,10.5 13,9.5 16,10.5 C14,11.5 9.5,9 10,7 C10.5,5 16,4.5 18,5.5 C16,6 13,4.5 14,3 C15,1.5 18,1 19,1.5" fill="none" stroke="#111" stroke-width="2.2" stroke-linecap="round"/><path d="M8,23.5 L19.5,3" stroke="#c01830" stroke-width="1.2"/><path d="M16,17 L22,13" stroke="#aaa" stroke-width="0.9" stroke-dasharray="1 1"/></g><rect x="13" y="92" width="144" height="20" fill="#fff"/><rect x="143.5" y="92.5" width="13" height="19" fill="#e5e5e5" stroke="#adadad"/><path d="M146.5,100 L150,103.5 L153.5,100" fill="none" stroke="#444" stroke-width="1"/><path d="M19.5,102 L22,104.5 L26.5,99.5" fill="none" stroke="#111" stroke-width="1.4"/><text x="37" y="106" font-size="11.5" font-family="Liberation Sans" fill="#111">Layer0</text></svg></div>
<svg id="vp" class="a" width="1920" height="853" viewBox="0 158 1920 853">
<rect x="0" y="158" width="1920" height="853" fill="#f0f0f0"/><rect x="0" y="158" width="1918.5" height="853" fill="#cccdc8"/>
<g stroke-width="1" fill="none">
<line x1="778.6" y1="677" x2="181.5" y2="160" stroke="#8a4040" stroke-dasharray="1.3 2.7" opacity="0.65"/>
<line x1="778.6" y1="677" x2="0" y2="871.8" stroke="#3a8a40" stroke-dasharray="1.3 2.7" opacity="0.7"/>
<line x1="778.6" y1="677" x2="797.2" y2="1011" stroke="#40409a" stroke-dasharray="1.3 2.7" opacity="0.7"/>
<line x1="778.6" y1="677" x2="1163.4" y2="1011" stroke="#b82020"/>
<line x1="778.6" y1="677" x2="1918" y2="391.9" stroke="#20a020"/>
<line x1="761.5" y1="372" x2="750" y2="159" stroke="#2020e0"/>
<line x1="773.5" y1="585" x2="778.6" y2="677" stroke="#101090" stroke-width="2"/>
<line x1="761.5" y1="372" x2="773.5" y2="585" stroke="#000" stroke-width="2"/>
</g>

<defs>
<linearGradient id="gw1" x1="900" y1="770" x2="1030" y2="680" gradientUnits="userSpaceOnUse"><stop offset="0" stop-color="#fafafa"/><stop offset="0.6" stop-color="#e6e6e6"/><stop offset="1" stop-color="#c4c4c4"/></linearGradient>
<linearGradient id="gw2" x1="990" y1="850" x2="1165" y2="700" gradientUnits="userSpaceOnUse"><stop offset="0" stop-color="#fbfbfb"/><stop offset="0.5" stop-color="#eeeeee"/><stop offset="0.8" stop-color="#d8d8d8"/><stop offset="1" stop-color="#c8c8c8"/></linearGradient>
</defs>
<g stroke="#000" stroke-linejoin="round">
<!-- floor -->
<polygon fill="#b9b9b9" stroke="none" points="903.8,776.8 947.8,756.3 980.3,737 1000.7,716.6 1016.4,697.3 1029.6,684.1 1030.2,684.7 1155.1,706.7 1148.3,724.2 1128.9,755.3 1093.9,780.5 1045.3,807.7 1020,819.4 985,847.6"/>
<!-- front section face -->
<polygon fill="#d4d4d4" stroke="none" points="897.2,761.1 902,765.9 903.8,776.8 985,847.6 986,838 989.8,836 989.8,859.3 897.2,780.4"/>
<!-- left wall inner face -->
<polygon fill="url(#gw1)" stroke="none" points="902,765.9 944.2,748.5 974.3,731 996,713 1012.8,695 1028.4,674.4 1030.2,675 1030.2,684.1 1029.6,684.1 1016.4,697.3 1000.7,716.6 980.3,737 947.8,756.3 903.8,776.8"/>
<!-- left wall top -->
<polygon fill="#c6c6c6" stroke="none" points="897.2,761.1 940.6,744.3 968.2,728.6 992.3,705.7 1008,687.7 1020,671.4 1028.4,673.2 1030.2,675 1028.4,674.4 1012.8,695 996,713 974.3,731 944.2,748.5 902,765.9"/>
<!-- right wall top band -->
<polygon fill="#d0d0d0" stroke="none" points="986,838 989.8,836 1020,824.3 1045.3,811.6 1093.9,784.4 1130.8,755.3 1154.1,724.2 1160,700.8 1161.9,697.9 1165.8,698.9 1155.1,706.7 1148.3,724.2 1128.9,755.3 1093.9,780.5 1045.3,807.7 1020,819.4 985,847.6"/>
<!-- right wall outer face -->
<polygon fill="url(#gw2)" stroke="none" points="989.8,836 1020,824.3 1045.3,811.6 1093.9,784.4 1130.8,755.3 1154.1,724.2 1160,700.8 1161.9,697.9 1165.8,698.9 1165.8,700.8 1163.9,718.3 1152.2,745.5 1128.9,776.6 1093.9,807.7 1049.2,833 1020,846.6 989.8,859.3"/>
<!-- edges -->
<polyline fill="none" stroke-width="1.8" points="897.2,780.4 897.2,761.1 940.6,744.3 968.2,728.6 992.3,705.7 1008,687.7 1020,671.4 1028.4,673.2 1030.2,675 1030.2,684.1"/>
<polyline fill="none" stroke-width="1.8" points="897.2,780.4 989.8,859.3 1020,846.6 1049.2,833 1093.9,807.7 1128.9,776.6 1152.2,745.5 1163.9,718.3 1165.8,700.8 1165.8,698.9 1161.9,697.9"/>
<polyline fill="none" stroke-width="1.5" points="989.8,859.3 989.8,836 1020,824.3 1045.3,811.6 1093.9,784.4 1130.8,755.3 1154.1,724.2 1160,700.8 1161.9,697.9"/>
<polyline fill="none" stroke-width="1.5" points="1030.2,684.7 1155.1,706.7"/>
<polyline fill="none" stroke-width="1" points="897.2,761.1 902,765.9 903.8,776.8 985,847.6 986,838 989.8,836"/>
<polyline fill="none" stroke-width="0.8" points="902,765.9 944.2,748.5 974.3,731 996,713 1012.8,695 1028.4,674.4"/>
<polyline fill="none" stroke-width="0.8" points="903.8,776.8 947.8,756.3 980.3,737 1000.7,716.6 1016.4,697.3 1029.6,684.1"/>
<polyline fill="none" stroke-width="0.8" points="986,838 1020,821.4 1093.9,781.5 1132.8,751.4 1152.2,724.2 1159,700.8"/>
<polyline fill="none" stroke-width="0.8" points="985,847.6 1020,819.4 1045.3,807.7 1093.9,780.5 1128.9,755.3 1148.3,724.2 1155.1,706.7"/>
</g>

<rect x="0" y="158" width="1918.5" height="1" fill="#6a6a6a"/><rect x="1" y="158" width="1" height="853" fill="#707070"/><rect x="0" y="158" width="1" height="853" fill="#c4c8c8"/>
<path d="M622.2 309.5 L646.2 308.2 L697.9 306.6 L749.6 306.2 L800.9 307.2 L851.3 309.6 L900.4 313.3 L947.9 318.5 L993.2 325.2 L1035.8 333.1 L1075.0 342.6 L1109.9 353.7 L1139.6 366.6 L1163.0 381.2 L1178.7 397.5 L1185.2 415.4 L1181.1 434.6 L1164.7 454.9 L1134.8 475.7 L1090.7 496.2 L1032.3 515.7 L960.6 533.1 L878.0 547.4 L788.0 557.6 L695.3 563.0 L604.8 563.4 L521.5 558.8 L449.5 549.7 L391.6 537.0 L349.3 521.6 L322.7 504.5 L311.0 486.7 L312.8 469.0 L326.2 451.9 L349.2 435.9 L380.0 421.3 L417.0 408.3 L458.6 396.9 L503.8 387.3 L551.4 379.3 L600.8 373.1 L651.2 368.6 L702.0 365.7 L752.8 364.5 L803.3 365.0 L852.9 367.1 L901.2 370.9 L948.0 376.4 L992.5 383.7 L1034.4 392.9 L1072.8 403.9 L1107.1 416.9 L1136.1 431.9 L1158.9 449.0 L1174.1 467.9 L1180.3 488.7 L1176.0 511.1 L1159.8 534.5 L1130.4 558.5 L1087.2 582.1 L1030.2 604.4 L960.4 624.1 L880.1 640.2 L792.7 651.6 L702.6 657.4 L614.6 657.3 L533.5 651.5 L463.2 640.6 L406.4 625.4 L364.6 607.2 L338.0 587.0 L326.0 566.0 L327.0 545.0 L339.4 524.7 L361.4 505.7 L391.1 488.3 L426.9 472.8 L467.4 459.2 L511.5 447.6 L558.1 438.0 L606.5 430.5 L656.0 424.9 L705.9 421.2 L756.0 419.5 L805.6 419.8 L854.4 421.9 L902.0 426.1 L948.0 432.2 L991.9 440.4 L1033.0 450.7 L1070.8 463.2 L1104.3 477.9 L1132.8 494.9 L1155.0 514.1 L1169.7 535.6 L1175.6 559.0 L1171.1 584.2 L1155.0 610.5 L1126.2 637.3 L1083.9 663.7 L1028.2 688.5 L960.1 710.4 L882.0 728.1 L797.0 740.4 L709.5 746.5 L623.9 746.1 L544.9 739.3 L476.2 726.7 L420.4 709.4 L379.2 688.6 L352.7 665.6 L340.2 641.6 L340.6 617.6 L352.2 594.5 L373.1 572.7 L401.7 552.8 L436.4 534.9 L475.9 519.3 L519.0 505.9 L564.6 494.8 L612.1 486.0 L660.6 479.4 L709.8 475.0 L759.0 472.9 L807.8 472.9 L855.9 475.1 L902.8 479.5 L948.1 486.2 L991.2 495.2 L1031.7 506.6 L1068.8 520.4 L1101.7 536.7 L1129.5 555.6 L1151.2 576.9 L1165.5 600.6 L1171.0 626.5 L1166.5 654.2 L1150.5 683.1 L1122.1 712.6 L1080.7 741.4 L1026.2 768.4 L959.9 792.2 L883.8 811.3 L801.2 824.5 L716.0 830.9 L632.7 830.2 L555.6 822.4 L488.4 808.3 L433.8 789.1 L393.0 766.0 L366.6 740.5 L353.9 713.8 L353.6 687.2 L364.4 661.4 L384.3 637.2 L412.0 614.9 L445.7 594.9 L484.1 577.3 L526.2 562.3 L570.9 549.7 L617.4 539.7 L665.1 532.2 L713.5 527.2 L761.9 524.6 L810.0 524.4 L857.4 526.7 L903.6 531.4 L948.1 538.6 L990.6 548.4 L1030.4 560.8 L1066.9 575.8 L1099.2 593.6 L1126.4 614.1 L1147.6 637.3 L1161.4 663.1 L1166.7 691.2 L1166.5 699.0" fill="none" stroke="#050505" stroke-width="1.9" stroke-linejoin="round"/>
</svg>
<div class="a" style="left:7px;top:172px;width:1335px;height:66px;background:#f0f0f0;border-top:2px solid #fafafa;border-left:2px solid #fafafa;border-right:1px solid #666;border-bottom:2px solid #555"></div><div class="a" style="left:9px;top:174px;width:1331px;height:24.5px;background:linear-gradient(#97b3d2,#a3bcd9)"></div><div class="a" style="left:9px;top:198.5px;width:1331px;height:1.5px;background:#fafafa"></div><span class="a" style="left:12px;top:180px;font-size:10.8px;font-weight:bold;color:#111;white-space:nowrap;letter-spacing:-0.15px">JHS PowerBar</span><div class="a" style="left:1324px;top:179px;width:12px;height:13px;background:#d84848"></div><svg class="a" style="left:1324px;top:179px" width="12" height="13" viewBox="0 0 12 13"><path d="M3.5,4 L8.5,9 M8.5,4 L3.5,9" stroke="#fff" stroke-width="1.6"/></svg><svg class="a" style="left:0;top:0" width="1345" height="240" viewBox="0 0 1345 240"><g transform="translate(17,205)"><path d="M1,11 C5,9 9,6 12,3.5 C16,6 20,9 23.5,12 C19.5,14 15.5,17 12,20.5 C9,17 5,13.5 1,11 Z" fill="#20a0e8" stroke="#10406a" stroke-width="1.1" stroke-linejoin="round"/><path d="M6.5,14.5 C10,12 14,9 17.5,7.5" stroke="#fff" stroke-width="0.8" opacity="0.35" fill="none"/><text x="13" y="20.5" font-size="15" font-weight="bold" font-family="Liberation Sans" fill="#e01818">#</text></g><g transform="translate(51,205)"><path d="M1,11 C5,9 9,6 12,3.5 C16,6 20,9 23.5,12 C19.5,14 15.5,17 12,20.5 C9,17 5,13.5 1,11 Z" fill="#20a0e8" stroke="#10406a" stroke-width="1.1" stroke-linejoin="round"/><path d="M6.5,14.5 C10,12 14,9 17.5,7.5" stroke="#fff" stroke-width="0.8" opacity="0.35" fill="none"/></g><g transform="translate(85,205)"><path d="M1,11 C5,9 9,6 12,3.5 C16,6 20,9 23.5,12 C19.5,14 15.5,17 12,20.5 C9,17 5,13.5 1,11 Z" fill="#e0c030" stroke="#6a5a10" stroke-width="1.1" stroke-linejoin="round"/><path d="M5,8.5 C9,11.5 12.5,14.5 15.5,17.5 M8.5,6 C12,9 15.5,12 19,15 M6.5,14.5 C10,12 14,9 17.5,7.5" stroke="#9a8a20" stroke-width="0.8" fill="none"/></g><g transform="translate(119,205)"><path d="M1,11 C5,9 9,6 12,3.5 C16,6 20,9 23.5,12 C19.5,14 15.5,17 12,20.5 C9,17 5,13.5 1,11 Z" fill="#80d040" stroke="#3a6a10" stroke-width="1.1" stroke-linejoin="round"/><path d="M5,8.5 C9,11.5 12.5,14.5 15.5,17.5 M8.5,6 C12,9 15.5,12 19,15 M6.5,14.5 C10,12 14,9 17.5,7.5" stroke="#5a9a20" stroke-width="0.8" fill="none"/></g><g transform="translate(153,205)"><path d="M1,11 C5,9 9,6 12,3.5 C16,6 20,9 23.5,12 C19.5,14 15.5,17 12,20.5 C9,17 5,13.5 1,11 Z" fill="#e83030" stroke="#7a1010" stroke-width="1.1" stroke-linejoin="round"/><path d="M5,8.5 C9,11.5 12.5,14.5 15.5,17.5 M8.5,6 C12,9 15.5,12 19,15 M6.5,14.5 C10,12 14,9 17.5,7.5" stroke="#ff9a9a" stroke-width="0.8" fill="none"/></g><g transform="translate(187,205)"><path d="M1,11 C5,9 9,6 12,3.5 C16,6 20,9 23.5,12 C19.5,14 15.5,17 12,20.5 C9,17 5,13.5 1,11 Z" fill="#fafafa" stroke="#666" stroke-width="1.1" stroke-linejoin="round"/><path d="M5,8.5 C9,11.5 12.5,14.5 15.5,17.5 M8.5,6 C12,9 15.5,12 19,15 M6.5,14.5 C10,12 14,9 17.5,7.5" stroke="#888" stroke-width="0.8" fill="none"/></g><g transform="translate(221,205)"><path d="M6.5,7 A7.5,7.5 0 1 1 7.5,17.5" fill="none" stroke="#9a5000" stroke-width="6.5"/><path d="M6.5,7 A7.5,7.5 0 1 1 7.5,17.5" fill="none" stroke="#f0a028" stroke-width="4.8"/><path d="M8,6 A6,6 0 0 1 19,9" fill="none" stroke="#ffd080" stroke-width="1.2"/></g><g transform="translate(255,205)"><rect x="3" y="3" width="18" height="18" fill="#f02010" stroke="#333" stroke-width="1"/><rect x="12" y="12" width="9" height="9" fill="#fff" stroke="#333" stroke-width="0.8"/></g><g transform="translate(289,205)"><rect x="3" y="3" width="18" height="18" fill="#f2f2f2" stroke="#333" stroke-width="1.4"/><path d="M3,9 H21 M3,15 H21" stroke="#e02020" stroke-width="1.5"/></g><g transform="translate(323,205)"><path d="M3,3 C9,6 15,1 21,3 L20,19 C14,17 9,21 4,19 Z" fill="#fff" stroke="#333" stroke-width="1"/><path d="M3,3 L4,23" stroke="#2080a0" stroke-width="1.6"/><path d="M3,3 C9,6 15,1 21,3" stroke="#d02020" stroke-width="1" fill="none"/></g><g transform="translate(357,205)"><polygon points="2,10 8,8 8,20 2,22" fill="#b08048" stroke="#333" stroke-width="0.8"/><polygon points="8,8 14,10 14,13 22,11 22,20 14,22 8,20" fill="#c89858" stroke="#333" stroke-width="0.8"/><polygon points="2,10 8,8 14,10 8,12" fill="#e0c090"/><polygon points="14,13 18,11 22,11 18,14" fill="#e0c090"/></g><g transform="translate(391,205)"><path d="M2,18 L10,12" stroke="#777" stroke-width="5" stroke-linecap="round"/><path d="M13,11 L21,6" stroke="#777" stroke-width="5" stroke-linecap="round"/><rect x="9" y="10" width="5" height="4" fill="#fff" stroke="#666" stroke-width="0.6" transform="rotate(-30 11.5 12)"/></g><g transform="translate(425,205)"><path d="M3,20 L3,10 L8,4 L21,4 L21,7 L10,7 L6,11 L6,20 Z" fill="#e8e8e8" stroke="#555" stroke-width="1"/><path d="M5,21 L8,20" stroke="#555" stroke-width="1"/></g><g transform="translate(459,205)"><path d="M4,21 C6,14 9,8 20,3" stroke="#d03030" stroke-width="1" stroke-dasharray="2 2" fill="none"/><circle cx="4" cy="21" r="2.6" fill="#e02020"/><circle cx="6.5" cy="14" r="2.6" fill="#e02020"/><circle cx="11" cy="8" r="2.6" fill="#e02020"/><circle cx="16" cy="5" r="2.6" fill="#e02020"/><circle cx="21" cy="3" r="2.2" fill="#e02020"/></g><g transform="translate(493,205)"><rect x="9.5" y="1" width="5" height="22" fill="#f05050" stroke="#900" stroke-width="0.6"/><rect x="1" y="9" width="22" height="6" fill="#f05050" stroke="#900" stroke-width="0.6"/><rect x="5" y="6" width="3" height="12" fill="#d83030"/><rect x="16" y="6" width="3" height="12" fill="#d83030"/><path d="M1,12 H23" stroke="#600" stroke-width="0.8"/></g><g transform="translate(527,205)"><rect x="9.5" y="1" width="5" height="22" fill="#90e040" stroke="#3a7a10" stroke-width="0.6"/><rect x="2" y="4" width="20" height="5" fill="#a0f040" stroke="#3a7a10" stroke-width="0.6"/><rect x="1" y="10" width="22" height="5" fill="#a0f040" stroke="#3a7a10" stroke-width="0.6"/><rect x="4" y="16" width="16" height="5" fill="#a0f040" stroke="#3a7a10" stroke-width="0.6"/></g><g transform="translate(561,205)"><path d="M4,4 L20,20 M20,4 L4,20" stroke="#2a78d8" stroke-width="6"/><path d="M4,4 L20,20" stroke="#4a98f0" stroke-width="3"/></g><g transform="translate(595,205)"><polygon points="2,22 12,16 22,22" fill="#80e040" stroke="#4a9a20" stroke-width="0.8"/><path d="M12,2 C15,8 18,11 18,15 C18,19 6,19 6,15 C6,11 9,8 12,2 Z" fill="#80d8f0" stroke="#3a8aa8" stroke-width="0.8"/></g><g transform="translate(629,205)"><polygon points="2,22 12,16 22,22" fill="#80e040" stroke="#4a9a20" stroke-width="0.8"/><path d="M14,4 C17,9 20,12 20,16 C20,20 8,20 8,16 C8,12 11,9 14,4 Z" fill="#80d8f0" stroke="#3a8aa8" stroke-width="0.8"/><text x="0" y="11" font-size="10" font-weight="bold" font-family="Liberation Sans" fill="#333">#</text></g><g transform="translate(663,205)"><polygon points="12,1 22,22 12,21" fill="#f0c040" stroke="#666" stroke-width="0.8"/><polygon points="12,1 2,22 12,21" fill="#f8e898" stroke="#666" stroke-width="0.8"/></g><g transform="translate(697,205)"><path d="M6,20 C2,14 3,3 12,3 C21,3 21,13 14,15 C12,16 11,18 12,20" fill="none" stroke="#e0a020" stroke-width="3.6" stroke-linecap="round"/><path d="M6,20 C2,14 3,3 12,3" fill="none" stroke="#a06a10" stroke-width="0.6"/></g><g transform="translate(731,205)"><path d="M6,20 C2,14 3,5 10,4 M15,4 C21,6 21,13 14,15 C12,16 11,18 12,20" fill="none" stroke="#e0a020" stroke-width="3.6" stroke-linecap="round"/><path d="M7,2 L17,12 M17,2 L7,12" stroke="#d02020" stroke-width="1.6"/></g><g transform="translate(765,205)"><path d="M6,20 C2,14 3,3 12,3 C21,3 21,13 14,15 C12,16 11,18 12,20" fill="none" stroke="#2838a8" stroke-width="3.6" stroke-linecap="round"/><path d="M6,20 C2,14 3,3 12,3 C21,3 21,13 14,15 C12,16 11,18 12,20" fill="none" stroke="#f0d020" stroke-width="3.6" stroke-dasharray="2.5 2.5"/></g><g transform="translate(799,205)"><polygon points="12,1 15,8 23,12 15,16 12,23 9,16 1,12 9,8" fill="#70c0f0" stroke="#3a90d0" stroke-width="0.6"/><circle cx="12" cy="12" r="2" fill="#fff"/></g><g transform="translate(833,205)"><polygon points="5,9 15,7 20,10 20,21 10,23 5,20" fill="#a87850" stroke="#5a3a20" stroke-width="0.8"/><polygon points="5,9 15,7 20,10 10,12" fill="#c89870"/><path d="M2,4 L10,10" stroke="#333" stroke-width="1"/><path d="M8,5 H21" stroke="#30c030" stroke-width="2"/></g><g transform="translate(867,205)"><path d="M8,5 H13 A7,7 0 0 1 13,19 H6" fill="none" stroke="#8a0a0a" stroke-width="5.5"/><path d="M8,5 H13 A7,7 0 0 1 13,19 H6" fill="none" stroke="#e02020" stroke-width="3.8"/><polygon points="1,19 7,14 7,24" fill="#e02020"/></g><g transform="translate(901,205)"><polygon points="1,12 7,10 10,12 10,22 4,23 1,21" fill="#80e040" stroke="#3a8a10" stroke-width="0.8"/><polygon points="1,2 6,1 9,3 9,10 3,11 1,9" fill="#80e040" stroke="#3a8a10" stroke-width="0.8"/><polygon points="11,15 17,12 22,14 22,20 16,23 11,21" fill="#70d030" stroke="#3a8a10" stroke-width="0.8"/><path d="M12,9 C12,4 20,3 21,8" fill="none" stroke="#3a6ab0" stroke-width="2.5"/><polygon points="9,8 15,9 12,13" fill="#3a6ab0"/></g><g transform="translate(935,205)"><polygon points="3,12 10,10 14,13 14,21 7,23 3,20" fill="none" stroke="#2838a8" stroke-width="1.2"/><path d="M3,12 L7,15 L14,13 M7,15 V23" stroke="#2838a8" stroke-width="1" fill="none"/><polygon points="9,6 18,2 23,9 14,14" fill="#fff" stroke="#888" stroke-width="0.6"/><polygon points="17,5 23,9 18,14" fill="#9a8a70"/><path d="M8,8 C10,4 14,4 16,6" stroke="#d02020" stroke-width="1.8" fill="none"/></g><g transform="translate(969,205)"><polygon points="2,12 9,10 13,13 13,21 6,23 2,20" fill="none" stroke="#2838a8" stroke-width="1.2"/><path d="M2,12 L6,15 L13,13 M6,15 V23" stroke="#2838a8" stroke-width="1" fill="none"/><path d="M12,5 A6,6 0 0 1 21,10" fill="none" stroke="#e02020" stroke-width="2.5"/><path d="M21,13 A6,6 0 0 1 14,19" fill="none" stroke="#e02020" stroke-width="2.5"/><polygon points="10,3 14,8 10,8" fill="#e02020"/></g><g transform="translate(1003,205)"><polygon points="2,12 9,10 13,13 13,21 6,23 2,20" fill="none" stroke="#2838a8" stroke-width="1.2"/><path d="M2,12 L6,15 L13,13 M6,15 V23" stroke="#2838a8" stroke-width="1" fill="none"/><polygon points="4,4 10,1 14,6 8,9" fill="#fff" stroke="#888" stroke-width="0.6"/><path d="M8,4 L14,9" stroke="#d02020" stroke-width="2"/><path d="M16,8 A5,5 0 0 1 20,18 M14,20 A5,5 0 0 1 13,12" fill="none" stroke="#e02020" stroke-width="2.3"/></g><g transform="translate(1037,205)"><polygon points="2,8 14,2 22,14 10,21" fill="#f0e0a0" stroke="#b0a060" stroke-width="1"/><polygon points="7,9 14,6 17,13 10,16" fill="#e01010"/></g><g transform="translate(1071,205)"><g transform="translate(1,1)"><polygon points="1,3 6,1 10,3 10,9 5,11 1,9" fill="#e03030" stroke="#444" stroke-width="0.7"/><path d="M1,3 L5,5 L10,3 M5,5 V11" stroke="#444" stroke-width="0.6" fill="none"/></g><g transform="translate(12,1)"><polygon points="1,3 6,1 10,3 10,9 5,11 1,9" fill="#f0e040" stroke="#444" stroke-width="0.7"/><path d="M1,3 L5,5 L10,3 M5,5 V11" stroke="#444" stroke-width="0.6" fill="none"/></g><g transform="translate(1,12)"><polygon points="1,3 6,1 10,3 10,9 5,11 1,9" fill="#f0e040" stroke="#444" stroke-width="0.7"/><path d="M1,3 L5,5 L10,3 M5,5 V11" stroke="#444" stroke-width="0.6" fill="none"/></g><g transform="translate(12,12)"><polygon points="1,3 6,1 10,3 10,9 5,11 1,9" fill="#f0e040" stroke="#444" stroke-width="0.7"/><path d="M1,3 L5,5 L10,3 M5,5 V11" stroke="#444" stroke-width="0.6" fill="none"/></g></g><g transform="translate(1105,205)"><polygon points="3,7 9,3 21,5 21,16 15,21 3,18" fill="#a8c8d0" fill-opacity="0.7" stroke="#333" stroke-width="1"/><path d="M3,7 L15,9 L21,5 M15,9 V21 M9,3 V14 L3,18 M9,14 L21,16" stroke="#333" stroke-width="0.6" fill="none"/><g fill="#111"><circle cx="3" cy="7" r="1.2"/><circle cx="9" cy="3" r="1.2"/><circle cx="21" cy="5" r="1.2"/><circle cx="21" cy="16" r="1.2"/><circle cx="15" cy="21" r="1.2"/><circle cx="3" cy="18" r="1.2"/></g></g><g transform="translate(1139,205)"><rect x="2" y="2" width="20" height="20" fill="#f0b020" stroke="#6a4a10" stroke-width="1.2"/><path d="M2,12 L12,2 M2,22 L22,2 M12,22 L22,12 M12,2 V22" stroke="#6a4a10" stroke-width="0.8"/></g><g transform="translate(1173,205)"><rect x="2" y="2" width="20" height="20" fill="#f0b020" stroke="#6a4a10" stroke-width="1.2"/><path d="M12,2 V22 M2,12 H22" stroke="#6a4a10" stroke-width="0.8"/><path d="M2,22 L12,12 M12,12 L22,2" stroke="#c08010" stroke-width="0.6"/></g><g transform="translate(1207,205)"><rect x="2" y="2" width="20" height="20" fill="#f0b020" stroke="#6a4a10" stroke-width="1.2"/><path d="M8.7,2 V22 M15.3,2 V22 M2,8.7 H22 M2,15.3 H22" stroke="#6a4a10" stroke-width="0.8"/></g><g transform="translate(1241,205)"><path d="M13,4 l5,5 M18,4 l-5,5 M3,15 l5,5 M8,15 l-5,5 M15,15 l5,5 M20,15 l-5,5" stroke="#d02020" stroke-width="2"/></g><g transform="translate(1275,205)"><path d="M4,20 C3,10 8,3 14,3 C19,3 22,8 22,12" fill="none" stroke="#222" stroke-width="1"/><g fill="#222"><rect x="2.5" y="13" width="3" height="3"/><rect x="5" y="5.5" width="3" height="3"/><rect x="12" y="1.5" width="3" height="3"/><rect x="18" y="5" width="3" height="3"/><rect x="20" y="11" width="3" height="3"/><rect x="4" y="19" width="3" height="3"/></g></g><g transform="translate(1308,205)"><g fill="none" stroke="#2838a8" stroke-width="1.2"><rect x="1.5" y="1.5" width="9" height="9"/><path d="M1.5,4 H8 V10.5 M8,4 L10.5,1.5"/><rect x="1.5" y="13.5" width="9" height="9"/><path d="M1.5,16 H8 V22.5"/><rect x="13.5" y="13.5" width="9" height="9"/><path d="M13.5,16 H20 V22.5"/></g><path d="M15,2 l3,3 M18,2 l-3,3 M19,7 l3,3 M22,7 l-3,3 M12,8 l2,2 M14,8 l-2,2" stroke="#222" stroke-width="1.3"/></g></svg>
<div id="status" class="a"><svg class="a" style="left:0;top:0" width="100" height="29" viewBox="0 0 100 29">
<circle cx="13" cy="15" r="6.8" fill="none" stroke="#9a9a9a" stroke-width="0.9"/><path d="M11,12 a2.2,2.2 0 1 1 4.2,0 L14,17.5 H12 Z" fill="#8a8a8a"/>
<circle cx="43" cy="15" r="6.8" fill="none" stroke="#111" stroke-width="1.4"/><circle cx="43" cy="11" r="1.3" fill="#111"/><path d="M41.3,13.5 H44.7 L44,19 H42 Z" fill="#111"/>
<circle cx="73" cy="15" r="6.8" fill="#c8c8c8" stroke="#a8a8a8" stroke-width="0.9"/><circle cx="73" cy="12.5" r="2.4" fill="#f0f0f0"/><path d="M68.5,19 C69.5,15.5 76.5,15.5 77.5,19" fill="#f0f0f0"/>
<rect x="92" y="10" width="1" height="9" fill="#999"/>
</svg>
<span class="a" style="left:103px;top:9.5px;white-space:nowrap;letter-spacing:0.24px">Select objects. Shift to extend select. Drag mouse to select multiple.</span>
<div class="a" style="left:1609px;top:10px;width:1px;height:9px;background:#999"></div>
<span class="a" style="left:1620px;top:9.5px;white-space:nowrap;letter-spacing:0.18px">Measurements</span>
<div class="a" style="left:1715px;top:4px;width:200px;height:23px;background:#f0f0f0;border:1px solid #b8c0cc"></div>
</div>
<div id="task" class="a"><svg class="a" style="left:0;top:0" width="1920" height="40" viewBox="0 1040 1920 40">
<!-- start -->
<g fill="#fff"><rect x="16" y="1052.5" width="7.3" height="7"/><rect x="24.3" y="1051.5" width="8" height="8"/><rect x="16" y="1060.5" width="7.3" height="7"/><rect x="24.3" y="1060.5" width="8" height="8"/></g>
<!-- search box -->
<rect x="48" y="1040" width="288" height="40" fill="#f2f2f2"/>
<rect x="48.5" y="1040.5" width="287" height="39" fill="none" stroke="#d8d8d8"/>
<circle cx="72" cy="1056" r="5.5" fill="none" stroke="#222" stroke-width="1.3"/><line x1="68" y1="1060" x2="61" y2="1067" stroke="#222" stroke-width="1.4"/>
<text x="88" y="1066" font-size="14.4" font-family="Liberation Sans" fill="#333">Type here to search</text>
<path d="M288.5,1048 Q290.5,1056.5 299.5,1058.5 Q290.5,1060.5 288.5,1070 Q286.5,1060.5 277.5,1058.5 Q286.5,1056.5 288.5,1048 Z" fill="#f7b91e"/>
<path d="M310,1059 Q310.5,1064 315,1065 Q310.5,1066 310,1071 Q309.5,1066 305,1065 Q309.5,1064 310,1059 Z" fill="#f6b820"/>
<path d="M269,1066 Q269.3,1069 272,1069.5 Q269.3,1070 269,1073 Q268.7,1070 266,1069.5 Q268.7,1069 269,1066 Z" fill="#2a9ae8"/>
<circle cx="304.5" cy="1053" r="1.6" fill="#e0603a"/><circle cx="323" cy="1072" r="1.6" fill="#70b050"/>
<!-- task view -->
<g fill="none" stroke="#fff" stroke-width="1.2"><path d="M352,1053 H362 M352,1066 H362"/><rect x="354" y="1055.5" width="8" height="8"/><path d="M366,1052 V1067"/></g><rect x="364.5" y="1056" width="3" height="3" fill="#fff"/>
<!-- explorer -->
<path d="M400,1052 h7 l2,2 h12.5 v14.5 h-21.5 z" fill="#f8c850"/><rect x="400" y="1054" width="21.5" height="2" fill="#e0a830"/>
<path d="M404,1068.5 v-5 h13.5 v5 h-3 v-2.5 h-7.5 v2.5 z" fill="#4a9ade"/>
<rect x="391" y="1078" width="40" height="2" fill="#76b9ed"/>
<!-- store -->
<path d="M449,1055 h21 v15 q0,2 -2,2 h-17 q-2,0 -2,-2 z" fill="#f4f4f4"/><path d="M453.5,1055 v-4 q0,-2 2,-2 h8 q2,0 2,2 v4" fill="none" stroke="#39a0d8" stroke-width="1.6"/>
<rect x="455" y="1058" width="4" height="4" fill="#e04a20"/><rect x="460" y="1058" width="4" height="4" fill="#70b020"/><rect x="455" y="1063" width="4" height="4" fill="#20a0e8"/><rect x="460" y="1063" width="4" height="4" fill="#f0b810"/>
<!-- blue tile -->
<rect x="497" y="1048" width="24" height="24" fill="#1a8ad8"/><g fill="none" stroke="#cfe8f8" stroke-width="1"><rect x="503" y="1056" width="8" height="7"/><rect x="510" y="1058" width="4" height="8"/><path d="M505,1056 v-3 h6 v3"/></g>
<!-- outlook -->
<rect x="552" y="1049" width="18" height="21" rx="1.5" fill="#0a64c8"/><rect x="558" y="1049" width="12" height="7" fill="#28a8e8"/><path d="M554,1062 L570,1070 V1058 Z" fill="#1890e0"/>
<rect x="546" y="1054" width="13" height="13" rx="1.5" fill="#0f5cb8"/><circle cx="552.5" cy="1060.5" r="3.6" fill="none" stroke="#fff" stroke-width="1.8"/>
<!-- word -->
<rect x="598" y="1049" width="18.5" height="22" rx="2" fill="#2850c8"/><rect x="598" y="1049" width="18.5" height="8" rx="2" fill="#50b0f0"/><rect x="598" y="1056" width="18.5" height="7" fill="#2a7ae0"/>
<rect x="595" y="1058" width="11" height="10" rx="1" fill="#1c48b0"/><text x="596.5" y="1066.5" font-size="8" font-weight="bold" font-family="Liberation Sans" fill="#fff">W</text>
<!-- brave -->
<path d="M648,1050 l4,-2.5 h8 l4,2.5 l2,3 l-2,9 l-8,9.5 l-8,-9.5 l-2,-9 z" fill="#f05a22"/>
<path d="M651,1055 l3,-3 h6 l3,3 l-1,5 l-3,4 h-4 l-3,-4 z" fill="#fff" opacity="0.95"/><path d="M654,1058 h2 M658,1058 h2 M655,1063 h4" stroke="#f05a22" stroke-width="1.2"/>
<!-- firefox -->
<circle cx="704.5" cy="1060" r="11" fill="#f5621f"/><path d="M694,1056 Q700,1047 710,1049 Q716,1052 715.5,1060 Q714,1056 710,1053 Z" fill="#ffb020"/><path d="M704,1049 q4,-3 3,-2" fill="#ffb020"/>
<circle cx="705" cy="1060" r="5.5" fill="#7a3ad8"/><path d="M697,1066 Q704,1072 712,1066" stroke="#ff3a6a" stroke-width="2" fill="none"/>
<rect x="685" y="1078" width="40" height="2" fill="#76b9ed"/>
<!-- mail-ish -->
<polygon points="744,1052 762,1050 765,1066 747,1068" fill="#d8c070"/><rect x="743" y="1054" width="19" height="13" fill="#8ad0f0"/><rect x="754" y="1056" width="4" height="3" fill="#e06040"/><rect x="745" y="1062" width="8" height="3" fill="#fff" opacity="0.8"/><path d="M741,1069 Q748,1064 765,1067" stroke="#e0b040" stroke-width="2" fill="none"/>
<!-- sketchup active -->
<rect x="779" y="1040" width="47.5" height="40" fill="#2b2b2b"/><rect x="823" y="1040" width="3.5" height="40" fill="#333"/>
<polygon points="793,1051 802,1048 813,1052 812,1065 800,1071 795,1067" fill="#d82028"/><polygon points="793,1051 802,1048 813,1052 803,1056" fill="#f05050"/>
<path d="M797,1056 L806,1053 M798,1060 L804,1058 M799,1064 L802,1063" stroke="#fff" stroke-width="1.8"/>
<rect x="779" y="1078" width="47.5" height="2" fill="#76b9ed"/>
<!-- weather -->
<path d="M1541,1048 a5,5 0 1 0 6,6 a4,4 0 0 1 -6,-6 z" fill="#f0a830"/>
<path d="M1537,1071 h19 a4,4 0 0 0 0,-8 a6,6 0 0 0 -11,-3 a4.5,4.5 0 0 0 -8,4 a3.5,3.5 0 0 0 0,7 z" fill="#a8c8f0"/>
<text x="1566" y="1065" font-size="13.2" font-family="Liberation Sans" fill="#fff">54°F</text>
<text x="1602" y="1065" font-size="14" font-family="Liberation Sans" fill="#fff">Mostly cloudy</text>
<path d="M1713,1064 L1719,1057.5 L1725,1064" fill="none" stroke="#fff" stroke-width="1.2"/>
<g fill="none" stroke="#fff" stroke-width="1.1"><rect x="1738.5" y="1055" width="8" height="8" rx="1.5"/><path d="M1746.5,1057.5 l3,-2 v7 l-3,-2"/><path d="M1740,1052 h5 M1740,1066 h5"/></g>
<g fill="none" stroke="#fff" stroke-width="1.1"><rect x="1761" y="1054.5" width="14" height="9"/><path d="M1768,1063.5 v3 M1764,1066.5 h8"/><rect x="1758.5" y="1053.5" width="4" height="4"/></g>
<g fill="none" stroke="#fff" stroke-width="1.1"><path d="M1783,1057 h3 l4,-3.5 v13 l-4,-3.5 h-3 z"/><path d="M1792.5,1057 q1.5,3 0,6 M1795,1055 q3,5 0,10 M1797.5,1053.5 q4,6.5 0,13"/></g>
<text x="1813.8" y="1055.5" font-size="11.4" font-family="Liberation Sans" fill="#fff">8:17 PM</text>
<text x="1811.7" y="1073" font-size="11.9" font-family="Liberation Sans" fill="#fff">2/8/2026</text>
<path d="M1879,1052 h16 v12 h-8 l-3,3 v-3 h-5 z" fill="none" stroke="#fff" stroke-width="1.1"/>
<rect x="1915" y="1040" width="1" height="40" fill="#555"/>
</svg>
</div>
</body></html>
